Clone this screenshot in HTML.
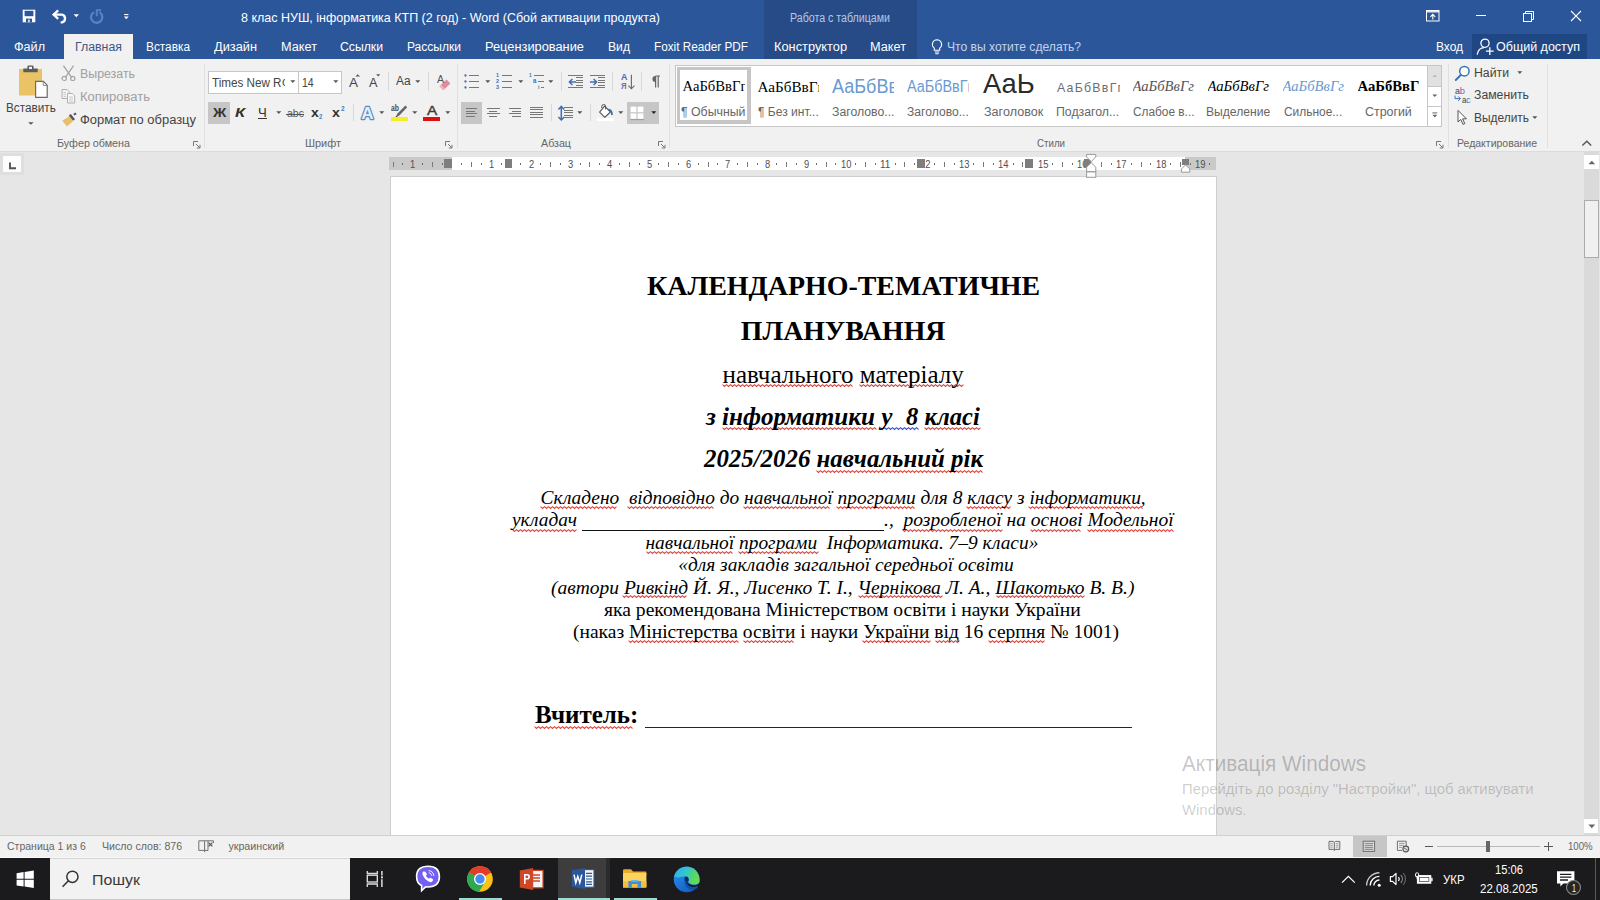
<!DOCTYPE html>
<html lang="ru"><head><meta charset="utf-8"><title>Word</title>
<style>
html,body{margin:0;padding:0;width:1600px;height:900px;overflow:hidden;background:#e6e6e6;font-family:"Liberation Sans",sans-serif;}
#r{position:relative;width:1600px;height:900px;overflow:hidden;}
#r>div,#r>svg,#r>span{position:absolute;display:block;}
.t{white-space:pre;transform-origin:0 50%;}
.bl{display:inline-block;width:0;height:0;}
</style></head><body><div id="r">
<div style="left:0px;top:0px;width:1600px;height:59px;background:#2b579a;"></div>
<div style="left:764px;top:0px;width:153px;height:59px;background:#264b87;"></div>
<div style="left:1472px;top:34px;width:115px;height:25px;background:#1f4784;"></div>
<div style="left:64px;top:34px;width:69px;height:26px;background:#f1f1f1;"></div>
<div style="left:0px;top:59px;width:1600px;height:93px;background:#f1f1f1;"></div>
<div style="left:0px;top:151px;width:1600px;height:1px;background:#dcdcdc;"></div>
<div style="left:0px;top:152px;width:1600px;height:684px;background:#e6e6e6;"></div>
<div style="left:389px;top:157px;width:827px;height:13px;background:#ffffff;"></div>
<div style="left:389px;top:157px;width:63px;height:13px;background:#c9c9c9;"></div>
<div style="left:1185px;top:157px;width:31px;height:13px;background:#c9c9c9;"></div>
<div style="left:390px;top:176px;width:827px;height:660px;background:#cecece;"></div>
<div style="left:391px;top:177px;width:825px;height:659px;background:#ffffff;"></div>
<div style="left:1583.5px;top:152px;width:15.2px;height:684px;background:#dadada;"></div>
<div style="left:0px;top:835px;width:1600px;height:1px;background:#d0d0d0;"></div>
<div style="left:0px;top:836px;width:1600px;height:22px;background:#f1f1f1;"></div>
<div style="left:0px;top:858px;width:1600px;height:42px;background:#1b1b1d;"></div>
<div style="left:50px;top:858px;width:300px;height:42px;background:#f2f2f2;"></div>
<div style="left:50px;top:858px;width:300px;height:1px;background:#d4d4d4;"></div>
<div style="left:50px;top:899px;width:300px;height:1px;background:#cacaca;"></div>
<div style="left:208px;top:71px;width:134px;height:23px;background:#c6c6c6;"></div>
<div style="left:209px;top:72px;width:89px;height:21px;background:#fff;"></div>
<div style="left:299px;top:72px;width:42px;height:21px;background:#fff;"></div>
<div style="left:282px;top:74px;width:3.4px;height:16px;overflow:hidden;font:12px/1 'Liberation Sans',sans-serif;color:#444"><span style="position:absolute;left:0;top:2.34px">o</span></div>
<div style="left:208px;top:102px;width:22px;height:22px;background:#c6c6c6;"></div>
<div style="left:461px;top:102px;width:21px;height:22px;background:#c6c6c6;"></div>
<div style="left:627px;top:102px;width:32px;height:22px;background:#c6c6c6;"></div>
<div style="left:675px;top:65px;width:767px;height:62px;background:#c6c6c6;"></div>
<div style="left:676px;top:66px;width:765px;height:60px;background:#ffffff;"></div>
<div style="left:1427px;top:66px;width:1px;height:60px;background:#c6c6c6;"></div>
<div style="left:1428px;top:66px;width:13px;height:20px;background:#e1e1e1;"></div>
<div style="left:1428px;top:86px;width:13px;height:1px;background:#c6c6c6;"></div>
<div style="left:1428px;top:105.5px;width:13px;height:1px;background:#c6c6c6;"></div>
<div style="left:676.5px;top:66.5px;width:74px;height:57px;background:#c6c6c6;"></div>
<div style="left:680px;top:70px;width:67px;height:50px;background:#fff;"></div>
<div style="left:682.5px;top:75.46px;width:62.10px;height:22.7px;overflow:hidden"><span style="position:absolute;left:0;top:4px;white-space:pre;font:14.67px/1 'Liberation Serif',serif;color:#000;transform-origin:0 50%;transform:scaleX(1.0);letter-spacing:0px">АаБбВвГг</span></div>
<div style="left:757.5px;top:75.02px;width:61.40px;height:23.2px;overflow:hidden"><span style="position:absolute;left:0;top:4px;white-space:pre;font:15.2px/1 'Liberation Serif',serif;color:#000;transform-origin:0 50%;transform:scaleX(1.0);letter-spacing:0px">АаБбВвГг</span></div>
<div style="left:832px;top:71.90px;width:62.00px;height:28.5px;overflow:hidden"><span style="position:absolute;left:0;top:4px;white-space:pre;font:20.5px/1 'Liberation Sans',sans-serif;color:#6a9ad0;transform-origin:0 50%;transform:scaleX(0.88);letter-spacing:0px">АаБбВвГг</span></div>
<div style="left:907px;top:74.96px;width:61.90px;height:24.0px;overflow:hidden"><span style="position:absolute;left:0;top:4px;white-space:pre;font:16px/1 'Liberation Sans',sans-serif;color:#6a9ad0;transform-origin:0 50%;transform:scaleX(0.9);letter-spacing:0px">АаБбВвГг</span></div>
<div style="left:983px;top:66.06px;width:59.00px;height:35.4px;overflow:hidden"><span style="position:absolute;left:0;top:4px;white-space:pre;font:27.4px/1 'Liberation Sans',sans-serif;color:#2a2a2a;transform-origin:0 50%;transform:scaleX(1.0);letter-spacing:0px">АаЬ</span></div>
<div style="left:1057px;top:77.00px;width:62.60px;height:21.0px;overflow:hidden"><span style="position:absolute;left:0;top:4px;white-space:pre;font:13px/1 'Liberation Sans',sans-serif;color:#6e6e6e;transform-origin:0 50%;transform:scaleX(0.95);letter-spacing:1.3px">АаБбВвГг</span></div>
<div style="left:1132.5px;top:75.46px;width:62.10px;height:22.7px;overflow:hidden"><span style="position:absolute;left:0;top:4px;white-space:pre;font:italic 14.67px/1 'Liberation Serif',serif;color:#555;transform-origin:0 50%;transform:scaleX(1.0);letter-spacing:0px">АаБбВвГг</span></div>
<div style="left:1207.5px;top:75.46px;width:62.10px;height:22.7px;overflow:hidden"><span style="position:absolute;left:0;top:4px;white-space:pre;font:italic 14.67px/1 'Liberation Serif',serif;color:#000;transform-origin:0 50%;transform:scaleX(1.0);letter-spacing:0px">АаБбВвГг</span></div>
<div style="left:1282.5px;top:75.46px;width:61.50px;height:22.7px;overflow:hidden"><span style="position:absolute;left:0;top:4px;white-space:pre;font:italic 14.67px/1 'Liberation Serif',serif;color:#6a9ad0;transform-origin:0 50%;transform:scaleX(1.0);letter-spacing:0px">АаБбВвГг</span></div>
<div style="left:1357.5px;top:75.46px;width:61.40px;height:22.7px;overflow:hidden"><span style="position:absolute;left:0;top:4px;white-space:pre;font:bold 14.67px/1 'Liberation Serif',serif;color:#000;transform-origin:0 50%;transform:scaleX(1.0);letter-spacing:0px">АаБбВвГг</span></div>
<svg style="left:1431.5px;top:74px;" width="6" height="4" viewBox="0 0 6 4"><path d="M0.6 3L2.8 0.8L5 3Z" fill="#b5b5b5"/></svg>
<svg style="left:1431.5px;top:94px;" width="6" height="4" viewBox="0 0 6 4"><path d="M0.4 0.4H5.2L2.8 3Z" fill="#666"/></svg>
<svg style="left:1431.5px;top:112px;" width="6" height="7" viewBox="0 0 6 7"><rect x="0.4" y="0.4" width="4.8" height="1" fill="#666"/><path d="M0.4 2.8H5.2L2.8 5.4Z" fill="#666"/></svg>
<div style="left:582px;top:529.5px;width:302px;height:1.1px;background:#111;"></div>
<div style="left:644.7px;top:726.7px;width:487.7px;height:1.5px;background:#262626;"></div>
<svg style="left:22px;top:9px;" width="14" height="14" viewBox="0 0 14 14"><path d="M0.7 0.7H13.3V13.3H0.7Z" fill="#fff"/><rect x="2.6" y="1.8" width="8.8" height="5.4" fill="#2b579a"/><rect x="4" y="9.6" width="6" height="3.7" fill="#2b579a"/><rect x="6.2" y="10.6" width="1.4" height="2.7" fill="#fff"/></svg>
<svg style="left:52px;top:9px;" width="17" height="15" viewBox="0 0 17 15"><path d="M6.2 1.4L1.6 5.6L6.2 9.8" fill="none" stroke="#fff" stroke-width="2.3"/><path d="M2 5.6H10.2A4.1 4.1 0 0 1 10.2 13.4H8.6" fill="none" stroke="#fff" stroke-width="2.3"/></svg>
<svg style="left:73px;top:14px;" width="7" height="4" viewBox="0 0 7 4"><path d="M0.6 0.2H6L3.3 3.2Z" fill="#fff"/></svg>
<svg style="left:89px;top:9px;" width="15" height="15" viewBox="0 0 15 15"><path d="M5 3.2A5.6 5.6 0 1 0 10.6 3.4" fill="none" stroke="#5b80bf" stroke-width="2.3"/><path d="M7.8 7.2V1.2H12.2" fill="none" stroke="#5b80bf" stroke-width="2"/></svg>
<svg style="left:123px;top:13px;" width="7" height="8" viewBox="0 0 7 8"><rect x="1.2" y="1" width="4.2" height="1.1" fill="#fff"/><path d="M0.9 3.6H5.7L3.3 6.2Z" fill="#fff"/></svg>
<svg style="left:1425px;top:9px;" width="16" height="14" viewBox="0 0 16 14"><rect x="1.5" y="1.5" width="12.5" height="10.5" fill="none" stroke="#fff" stroke-width="1"/><rect x="1.5" y="1.5" width="12.5" height="2" fill="#fff" opacity=".85"/><path d="M7.8 10.5V5.6M5.4 7.8L7.8 5.4L10.2 7.8" fill="none" stroke="#fff" stroke-width="1.1"/></svg>
<div style="left:1476px;top:15px;width:10px;height:1px;background:#fff;"></div>
<svg style="left:1521px;top:9px;" width="14" height="14" viewBox="0 0 14 14"><rect x="2.5" y="4.5" width="8" height="8" fill="none" stroke="#fff" stroke-width="1"/><path d="M4.5 4.5V2.5H12.5V10.5H10.5" fill="none" stroke="#fff" stroke-width="1"/></svg>
<svg style="left:1570px;top:10px;" width="12" height="12" viewBox="0 0 12 12"><path d="M1 1L11 11M11 1L1 11" stroke="#fff" stroke-width="1.1" fill="none"/></svg>
<svg style="left:929px;top:38px;" width="16" height="18" viewBox="0 0 16 18"><path d="M8 1.8A4.6 4.6 0 0 0 5.3 10.1V12.2H10.7V10.1A4.6 4.6 0 0 0 8 1.8Z" fill="none" stroke="#fff" stroke-width="1.1"/><path d="M5.8 14H10.2M6.3 15.8H9.7" stroke="#fff" stroke-width="1.1"/></svg>
<svg style="left:1476px;top:37px;" width="20" height="20" viewBox="0 0 20 20"><circle cx="9" cy="6.2" r="4.1" fill="none" stroke="#fff" stroke-width="1.3"/><path d="M1.2 17.6C2 13 5 10.6 8.2 10.6" fill="none" stroke="#fff" stroke-width="1.3"/><path d="M13.8 10.2V18M9.9 14.1H17.7" stroke="#fff" stroke-width="1.3"/></svg>
<svg style="left:17px;top:64px;" width="34" height="36" viewBox="0 0 34 36"><rect x="2" y="5" width="23" height="26.5" fill="#eac367"/>
<path d="M6.3 4.6H10.4V2.6Q10.4 1.4 11.6 1.4H15.4Q16.6 1.4 16.6 2.6V4.6H20.7V8.2H6.3Z" fill="#5c5c5c"/><rect x="12" y="2.8" width="3" height="2.2" fill="#f3f3f3"/>
<path d="M18.6 17.4H26.4L30.2 21.2V33.4H18.6Z" fill="#fff" stroke="#6b6b6b" stroke-width="1.2"/><path d="M26.2 17.6V21.4H30" fill="none" stroke="#8a8a8a" stroke-width="1"/></svg>
<svg style="left:28px;top:122px;" width="6" height="3" viewBox="0 0 6 3"><path d="M0.2 0.2H5.6L2.9 2.8Z" fill="#555"/></svg>
<svg style="left:60px;top:64px;" width="17" height="18" viewBox="0 0 17 18"><path d="M3.4 1.6L11.6 13.4M13.6 1.6L5.4 13.4" stroke="#a6a6a6" stroke-width="1.3" fill="none"/><circle cx="4.2" cy="14.4" r="2.1" fill="none" stroke="#a6a6a6" stroke-width="1.2"/><circle cx="12.8" cy="14.4" r="2.1" fill="none" stroke="#a6a6a6" stroke-width="1.2"/></svg>
<svg style="left:60px;top:88px;" width="17" height="17" viewBox="0 0 17 17"><path d="M2 1.5H7L9.2 3.7V10.5H2Z" fill="#f3f3f3" stroke="#b0b0b0" stroke-width="1"/><path d="M7.5 5.5H12.5L14.7 7.7V15H7.5Z" fill="#f7f7f7" stroke="#b0b0b0" stroke-width="1"/><path d="M3.5 4.5H6M3.5 6.5H6M3.5 8.5H6M9 9H13M9 11H13M9 13H13" stroke="#c4c4c4" stroke-width="0.9"/></svg>
<svg style="left:61px;top:112px;" width="17" height="16" viewBox="0 0 17 16"><path d="M1.2 8.8L8.4 4.2L12 9.2L6 14.6Z" fill="#e9c06a"/><path d="M7.8 3.4L9.8 1.9L14 7.3L12 8.8Z" fill="#555"/><path d="M12.2 2L14.4 0.6L15.6 2.2L13.4 3.6Z" fill="#555"/></svg>
<svg style="left:193px;top:141px;" width="8" height="8" viewBox="0 0 8 8"><path d="M0.5 5V0.5H5" fill="none" stroke="#777" stroke-width="1"/><path d="M3 3L6.8 6.8M7 3.8V7H3.8" fill="none" stroke="#777" stroke-width="1"/></svg>
<svg style="left:445px;top:141px;" width="8" height="8" viewBox="0 0 8 8"><path d="M0.5 5V0.5H5" fill="none" stroke="#777" stroke-width="1"/><path d="M3 3L6.8 6.8M7 3.8V7H3.8" fill="none" stroke="#777" stroke-width="1"/></svg>
<svg style="left:658px;top:141px;" width="8" height="8" viewBox="0 0 8 8"><path d="M0.5 5V0.5H5" fill="none" stroke="#777" stroke-width="1"/><path d="M3 3L6.8 6.8M7 3.8V7H3.8" fill="none" stroke="#777" stroke-width="1"/></svg>
<svg style="left:1436px;top:141px;" width="8" height="8" viewBox="0 0 8 8"><path d="M0.5 5V0.5H5" fill="none" stroke="#777" stroke-width="1"/><path d="M3 3L6.8 6.8M7 3.8V7H3.8" fill="none" stroke="#777" stroke-width="1"/></svg>
<div style="left:204px;top:64px;width:1px;height:84px;background:#e0e0e0;"></div>
<div style="left:457px;top:64px;width:1px;height:84px;background:#e0e0e0;"></div>
<div style="left:669px;top:64px;width:1px;height:84px;background:#e0e0e0;"></div>
<div style="left:1448px;top:64px;width:1px;height:84px;background:#e0e0e0;"></div>
<div style="left:1547px;top:64px;width:1px;height:84px;background:#e0e0e0;"></div>
<svg style="left:289.5px;top:80px;" width="6" height="4" viewBox="0 0 6 4"><path d="M0.3 0.3H5.3L2.8 3Z" fill="#555"/></svg>
<svg style="left:332.5px;top:80px;" width="6" height="4" viewBox="0 0 6 4"><path d="M0.3 0.3H5.3L2.8 3Z" fill="#555"/></svg>
<svg style="left:355px;top:74px;" width="6" height="3" viewBox="0 0 6 3"><path d="M0.4 2.6L2.7 0.3L5 2.6Z" fill="#555"/></svg>
<svg style="left:376px;top:74.4px;" width="5" height="3" viewBox="0 0 5 3"><path d="M0.2 0.3H4.2L2.2 2.4Z" fill="#555"/></svg>
<div style="left:388px;top:72px;width:1px;height:19px;background:#d8d8d8;"></div>
<svg style="left:415px;top:80px;" width="6" height="4" viewBox="0 0 6 4"><path d="M0.3 0.3H5.3L2.8 3Z" fill="#555"/></svg>
<div style="left:427.5px;top:72px;width:1px;height:19px;background:#d8d8d8;"></div>
<svg style="left:438px;top:78px;" width="14" height="13" viewBox="0 0 14 13"><path d="M1.4 8.2L8.6 1.6L12.4 5.6L5.4 12.2Z" fill="#e28b9c"/><path d="M1.4 8.2L3 6.8L6.8 10.8L5.4 12.2Z" fill="#f0b5c0"/></svg>
<div style="left:258px;top:118.3px;width:9.4px;height:1.1px;background:#333;"></div>
<svg style="left:275.6px;top:111px;" width="6" height="4" viewBox="0 0 6 4"><path d="M0.3 0.3H5.3L2.8 3Z" fill="#555"/></svg>
<div style="left:285.8px;top:113.6px;width:18.6px;height:1px;background:#555;"></div>
<div style="left:352.5px;top:104px;width:1px;height:17px;background:#d8d8d8;"></div>
<svg style="left:358px;top:102px;" width="19" height="20" viewBox="0 0 19 20"><text x="9.4" y="16.9" text-anchor="middle" font-family="Liberation Sans" font-size="17" font-weight="bold" fill="#e4eef9" stroke="#5a8cc4" stroke-width="2.4" paint-order="stroke" stroke-linejoin="round">A</text></svg>
<svg style="left:379.3px;top:111px;" width="6" height="4" viewBox="0 0 6 4"><path d="M0.3 0.3H5.3L2.8 3Z" fill="#555"/></svg>
<svg style="left:392px;top:104px;" width="17" height="14" viewBox="0 0 17 14"><path d="M13.4 1.6L15.2 3.2L7.4 11.6L4.4 12.6L5.2 9.8Z" fill="#666"/><path d="M3 13.4L4.6 11.4L6 12.6Z" fill="#444"/></svg>
<div style="left:390.8px;top:116.9px;width:17px;height:3.8px;background:#f5ee20;"></div>
<svg style="left:412.4px;top:111px;" width="6" height="4" viewBox="0 0 6 4"><path d="M0.3 0.3H5.3L2.8 3Z" fill="#555"/></svg>
<div style="left:423.4px;top:116.9px;width:16.4px;height:3.7px;background:#e01010;"></div>
<svg style="left:444.8px;top:111px;" width="6" height="4" viewBox="0 0 6 4"><path d="M0.3 0.3H5.3L2.8 3Z" fill="#555"/></svg>
<svg style="left:1453px;top:64px;" width="18" height="18" viewBox="0 0 18 18"><circle cx="11.4" cy="7.2" r="4.7" fill="#fdfdf3" stroke="#3b70b6" stroke-width="1.5"/><path d="M7.9 10.9L2.8 16" stroke="#3b70b6" stroke-width="2" stroke-linecap="round"/></svg>
<svg style="left:1517px;top:70.5px;" width="6" height="4" viewBox="0 0 6 4"><path d="M0.3 0.3H5.3L2.8 3Z" fill="#555"/></svg>
<svg style="left:1454px;top:95px;" width="8" height="7" viewBox="0 0 8 7"><path d="M1 0.6V3.6H6.2M4.2 1.4L6.4 3.6L4.2 5.8" fill="none" stroke="#3b70b6" stroke-width="1"/></svg>
<svg style="left:1456px;top:109px;" width="13" height="17" viewBox="0 0 13 17"><path d="M2 1.4V13L4.8 10.4L7 15.4L8.8 14.6L6.6 9.8H10.4Z" fill="#fff" stroke="#555" stroke-width="1" stroke-linejoin="round"/></svg>
<svg style="left:1532.3px;top:115.6px;" width="6" height="4" viewBox="0 0 6 4"><path d="M0.3 0.3H5.3L2.8 3Z" fill="#555"/></svg>
<svg style="left:1581px;top:139px;" width="12" height="8" viewBox="0 0 12 8"><path d="M1.4 6.6L5.8 2.2L10.2 6.6" fill="none" stroke="#555" stroke-width="1.4"/></svg>
<svg style="left:463.8px;top:73.8px;" width="3" height="3" viewBox="0 0 3 3"><circle cx="1.5" cy="1.5" r="1.15" fill="#3f6fb3"/></svg>
<div style="left:469px;top:74.8px;width:10px;height:1px;background:#777777;"></div>
<svg style="left:463.8px;top:79.7px;" width="3" height="3" viewBox="0 0 3 3"><circle cx="1.5" cy="1.5" r="1.15" fill="#3f6fb3"/></svg>
<div style="left:469px;top:80.7px;width:10px;height:1px;background:#777777;"></div>
<svg style="left:463.8px;top:85.5px;" width="3" height="3" viewBox="0 0 3 3"><circle cx="1.5" cy="1.5" r="1.15" fill="#3f6fb3"/></svg>
<div style="left:469px;top:86.5px;width:10px;height:1px;background:#777777;"></div>
<svg style="left:485px;top:80px;" width="6" height="4" viewBox="0 0 6 4"><path d="M0.3 0.3H5.3L2.8 3Z" fill="#555"/></svg>
<div style="left:501.7px;top:74.8px;width:10.0px;height:1px;background:#777777;"></div>
<div style="left:501.7px;top:80.7px;width:10.0px;height:1px;background:#777777;"></div>
<div style="left:501.7px;top:86.5px;width:10.0px;height:1px;background:#777777;"></div>
<svg style="left:517.6px;top:80px;" width="6" height="4" viewBox="0 0 6 4"><path d="M0.3 0.3H5.3L2.8 3Z" fill="#555"/></svg>
<div style="left:534.1px;top:74.8px;width:10.0px;height:1px;background:#777777;"></div>
<div style="left:538.2px;top:80.7px;width:5.9px;height:1px;background:#777777;"></div>
<div style="left:541px;top:86.5px;width:3.1px;height:1px;background:#777777;"></div>
<svg style="left:548.2px;top:80px;" width="6" height="4" viewBox="0 0 6 4"><path d="M0.3 0.3H5.3L2.8 3Z" fill="#555"/></svg>
<div style="left:561px;top:72px;width:1px;height:19px;background:#d8d8d8;"></div>
<div style="left:568.3px;top:74.8px;width:14.7px;height:1px;background:#777777;"></div>
<div style="left:568.3px;top:87.1px;width:14.7px;height:1px;background:#777777;"></div>
<div style="left:576.2px;top:77.4px;width:6.8px;height:1px;background:#777777;"></div>
<div style="left:576.2px;top:79.9px;width:6.8px;height:1px;background:#777777;"></div>
<div style="left:576.2px;top:82.4px;width:6.8px;height:1px;background:#777777;"></div>
<div style="left:576.2px;top:84.9px;width:6.8px;height:1px;background:#777777;"></div>
<svg style="left:567.6px;top:77.5px;" width="9" height="8" viewBox="0 0 9 8"><path d="M8 4H1.6M4.4 1L1.4 4L4.4 7" fill="none" stroke="#3f6fb3" stroke-width="1.5"/></svg>
<div style="left:590.2px;top:74.8px;width:14.8px;height:1px;background:#777777;"></div>
<div style="left:590.2px;top:87.1px;width:14.8px;height:1px;background:#777777;"></div>
<div style="left:598.1px;top:77.4px;width:6.9px;height:1px;background:#777777;"></div>
<div style="left:598.1px;top:79.9px;width:6.9px;height:1px;background:#777777;"></div>
<div style="left:598.1px;top:82.4px;width:6.9px;height:1px;background:#777777;"></div>
<div style="left:598.1px;top:84.9px;width:6.9px;height:1px;background:#777777;"></div>
<svg style="left:589.4px;top:77.5px;" width="9" height="8" viewBox="0 0 9 8"><path d="M1 4H7.4M4.6 1L7.6 4L4.6 7" fill="none" stroke="#3f6fb3" stroke-width="1.5"/></svg>
<div style="left:611.6px;top:72px;width:1px;height:19px;background:#d8d8d8;"></div>
<svg style="left:627px;top:73.5px;" width="9" height="17" viewBox="0 0 9 17"><path d="M4.4 0.8V14.6M1.4 11.6L4.4 14.8L7.4 11.6" fill="none" stroke="#666" stroke-width="1.1"/></svg>
<div style="left:641.2px;top:72px;width:1px;height:19px;background:#d8d8d8;"></div>
<svg style="left:650px;top:75px;" width="11" height="14" viewBox="0 0 11 14"><path d="M5.4 1H10M5.6 1V12.6M8.2 1V12.6" fill="none" stroke="#666" stroke-width="1.2"/><path d="M5.4 1A3 3 0 0 0 5.4 7Z" fill="#666"/></svg>
<div style="left:465.9px;top:108.0px;width:11.4px;height:1px;background:#777777;"></div>
<div style="left:465.9px;top:110.5px;width:9.0px;height:1px;background:#777777;"></div>
<div style="left:465.9px;top:113.1px;width:11.4px;height:1px;background:#777777;"></div>
<div style="left:465.9px;top:115.7px;width:9.0px;height:1px;background:#777777;"></div>
<div style="left:486.6px;top:108.0px;width:13.2px;height:1px;background:#777777;"></div>
<div style="left:489.3px;top:110.5px;width:8.1px;height:1px;background:#777777;"></div>
<div style="left:486.6px;top:113.1px;width:13.2px;height:1px;background:#777777;"></div>
<div style="left:489.3px;top:115.7px;width:8.1px;height:1px;background:#777777;"></div>
<div style="left:509.1px;top:108.0px;width:11.9px;height:1px;background:#777777;"></div>
<div style="left:512px;top:110.5px;width:9px;height:1px;background:#777777;"></div>
<div style="left:509.1px;top:113.1px;width:11.9px;height:1px;background:#777777;"></div>
<div style="left:512px;top:115.7px;width:9px;height:1px;background:#777777;"></div>
<div style="left:530px;top:106.7px;width:13.2px;height:1px;background:#777777;"></div>
<div style="left:530px;top:109.1px;width:13.2px;height:1px;background:#777777;"></div>
<div style="left:530px;top:111.6px;width:13.2px;height:1px;background:#777777;"></div>
<div style="left:530px;top:114.1px;width:13.2px;height:1px;background:#777777;"></div>
<div style="left:530px;top:116.6px;width:13.2px;height:1px;background:#777777;"></div>
<div style="left:551px;top:104px;width:1px;height:17px;background:#d8d8d8;"></div>
<svg style="left:556.6px;top:104.5px;" width="9" height="16.5" viewBox="0 0 9 16.5"><path d="M4.3 1.4V15M1.4 4.4L4.3 1.4L7.2 4.4M1.4 12L4.3 15L7.2 12" fill="none" stroke="#3f6fb3" stroke-width="1.5"/></svg>
<div style="left:564.3px;top:107.2px;width:8.3px;height:1px;background:#777777;"></div>
<div style="left:564.3px;top:109.7px;width:8.3px;height:1px;background:#777777;"></div>
<div style="left:564.3px;top:112.2px;width:8.3px;height:1px;background:#777777;"></div>
<div style="left:564.3px;top:114.8px;width:8.3px;height:1px;background:#777777;"></div>
<div style="left:564.3px;top:117.3px;width:8.3px;height:1px;background:#777777;"></div>
<svg style="left:577.4px;top:110.8px;" width="6" height="4" viewBox="0 0 6 4"><path d="M0.3 0.3H5.3L2.8 3Z" fill="#555"/></svg>
<div style="left:590px;top:104px;width:1px;height:17px;background:#d8d8d8;"></div>
<svg style="left:597px;top:102.5px;" width="18" height="19" viewBox="0 0 18 19"><path d="M7.6 3.2L13.4 9L7.8 14.4L2.6 9.2Z" fill="#fff" stroke="#555" stroke-width="1.1" stroke-linejoin="round"/><path d="M8.6 6.4V3.4A1.9 1.9 0 0 0 4.8 3.4V5" fill="none" stroke="#555" stroke-width="1"/><path d="M11.4 6.4Q15 7 15 12" fill="none" stroke="#3f6fb3" stroke-width="1.8"/><rect x="0" y="15" width="17" height="3.2" fill="#ffffff"/></svg>
<svg style="left:618.1px;top:110.8px;" width="6" height="4" viewBox="0 0 6 4"><path d="M0.3 0.3H5.3L2.8 3Z" fill="#555"/></svg>
<svg style="left:630px;top:105.5px;" width="15" height="15" viewBox="0 0 15 15"><rect x="0.6" y="0.6" width="5.8" height="5.6" fill="#fff"/><rect x="7.6" y="0.6" width="5.8" height="5.6" fill="#fff"/><rect x="0.6" y="7.4" width="5.8" height="5.4" fill="#fff"/><rect x="7.6" y="7.4" width="5.8" height="5.4" fill="#fff"/><rect x="0.2" y="13.1" width="13.6" height="1" fill="#9a9a9a"/></svg>
<svg style="left:650.8px;top:110.8px;" width="6" height="4" viewBox="0 0 6 4"><path d="M0.3 0.3H5.3L2.8 3Z" fill="#222"/></svg>
<div style="left:393px;top:161.5px;width:1px;height:5px;background:#7a7a7a;"></div>
<div style="left:402px;top:163px;width:1px;height:2px;background:#6a6a6a;"></div>
<div style="left:422px;top:163px;width:1px;height:2px;background:#6a6a6a;"></div>
<div style="left:432px;top:161.5px;width:1px;height:5px;background:#7a7a7a;"></div>
<div style="left:442px;top:163px;width:1px;height:2px;background:#6a6a6a;"></div>
<div style="left:461px;top:163px;width:1px;height:2px;background:#6a6a6a;"></div>
<div style="left:471px;top:161.5px;width:1px;height:5px;background:#7a7a7a;"></div>
<div style="left:481px;top:163px;width:1px;height:2px;background:#6a6a6a;"></div>
<div style="left:501px;top:163px;width:1px;height:2px;background:#6a6a6a;"></div>
<div style="left:511px;top:161.5px;width:1px;height:5px;background:#7a7a7a;"></div>
<div style="left:520px;top:163px;width:1px;height:2px;background:#6a6a6a;"></div>
<div style="left:540px;top:163px;width:1px;height:2px;background:#6a6a6a;"></div>
<div style="left:550px;top:161.5px;width:1px;height:5px;background:#7a7a7a;"></div>
<div style="left:560px;top:163px;width:1px;height:2px;background:#6a6a6a;"></div>
<div style="left:580px;top:163px;width:1px;height:2px;background:#6a6a6a;"></div>
<div style="left:589px;top:161.5px;width:1px;height:5px;background:#7a7a7a;"></div>
<div style="left:599px;top:163px;width:1px;height:2px;background:#6a6a6a;"></div>
<div style="left:619px;top:163px;width:1px;height:2px;background:#6a6a6a;"></div>
<div style="left:629px;top:161.5px;width:1px;height:5px;background:#7a7a7a;"></div>
<div style="left:639px;top:163px;width:1px;height:2px;background:#6a6a6a;"></div>
<div style="left:658px;top:163px;width:1px;height:2px;background:#6a6a6a;"></div>
<div style="left:668px;top:161.5px;width:1px;height:5px;background:#7a7a7a;"></div>
<div style="left:678px;top:163px;width:1px;height:2px;background:#6a6a6a;"></div>
<div style="left:698px;top:163px;width:1px;height:2px;background:#6a6a6a;"></div>
<div style="left:708px;top:161.5px;width:1px;height:5px;background:#7a7a7a;"></div>
<div style="left:717px;top:163px;width:1px;height:2px;background:#6a6a6a;"></div>
<div style="left:737px;top:163px;width:1px;height:2px;background:#6a6a6a;"></div>
<div style="left:747px;top:161.5px;width:1px;height:5px;background:#7a7a7a;"></div>
<div style="left:757px;top:163px;width:1px;height:2px;background:#6a6a6a;"></div>
<div style="left:776px;top:163px;width:1px;height:2px;background:#6a6a6a;"></div>
<div style="left:786px;top:161.5px;width:1px;height:5px;background:#7a7a7a;"></div>
<div style="left:796px;top:163px;width:1px;height:2px;background:#6a6a6a;"></div>
<div style="left:816px;top:163px;width:1px;height:2px;background:#6a6a6a;"></div>
<div style="left:826px;top:161.5px;width:1px;height:5px;background:#7a7a7a;"></div>
<div style="left:835px;top:163px;width:1px;height:2px;background:#6a6a6a;"></div>
<div style="left:855px;top:163px;width:1px;height:2px;background:#6a6a6a;"></div>
<div style="left:865px;top:161.5px;width:1px;height:5px;background:#7a7a7a;"></div>
<div style="left:875px;top:163px;width:1px;height:2px;background:#6a6a6a;"></div>
<div style="left:895px;top:163px;width:1px;height:2px;background:#6a6a6a;"></div>
<div style="left:904px;top:161.5px;width:1px;height:5px;background:#7a7a7a;"></div>
<div style="left:914px;top:163px;width:1px;height:2px;background:#6a6a6a;"></div>
<div style="left:934px;top:163px;width:1px;height:2px;background:#6a6a6a;"></div>
<div style="left:944px;top:161.5px;width:1px;height:5px;background:#7a7a7a;"></div>
<div style="left:954px;top:163px;width:1px;height:2px;background:#6a6a6a;"></div>
<div style="left:973px;top:163px;width:1px;height:2px;background:#6a6a6a;"></div>
<div style="left:983px;top:161.5px;width:1px;height:5px;background:#7a7a7a;"></div>
<div style="left:993px;top:163px;width:1px;height:2px;background:#6a6a6a;"></div>
<div style="left:1013px;top:163px;width:1px;height:2px;background:#6a6a6a;"></div>
<div style="left:1022px;top:161.5px;width:1px;height:5px;background:#7a7a7a;"></div>
<div style="left:1032px;top:163px;width:1px;height:2px;background:#6a6a6a;"></div>
<div style="left:1052px;top:163px;width:1px;height:2px;background:#6a6a6a;"></div>
<div style="left:1062px;top:161.5px;width:1px;height:5px;background:#7a7a7a;"></div>
<div style="left:1072px;top:163px;width:1px;height:2px;background:#6a6a6a;"></div>
<div style="left:1091px;top:163px;width:1px;height:2px;background:#6a6a6a;"></div>
<div style="left:1101px;top:161.5px;width:1px;height:5px;background:#7a7a7a;"></div>
<div style="left:1111px;top:163px;width:1px;height:2px;background:#6a6a6a;"></div>
<div style="left:1131px;top:163px;width:1px;height:2px;background:#6a6a6a;"></div>
<div style="left:1141px;top:161.5px;width:1px;height:5px;background:#7a7a7a;"></div>
<div style="left:1150px;top:163px;width:1px;height:2px;background:#6a6a6a;"></div>
<div style="left:1170px;top:163px;width:1px;height:2px;background:#6a6a6a;"></div>
<div style="left:1180px;top:161.5px;width:1px;height:5px;background:#7a7a7a;"></div>
<div style="left:1190px;top:163px;width:1px;height:2px;background:#6a6a6a;"></div>
<div style="left:1209px;top:163px;width:1px;height:2px;background:#6a6a6a;"></div>
<div style="left:0px;top:153px;width:24px;height:22px;background:#dfdfdf;"></div>
<div style="left:3px;top:156px;width:17.6px;height:16px;background:#fdfdfd;"></div>
<svg style="left:3px;top:156px;" width="18" height="16" viewBox="0 0 18 16"><path d="M7 6.4V12.3H13" fill="none" stroke="#555" stroke-width="1.9"/></svg>
<div style="left:1583.5px;top:155px;width:15px;height:14px;background:#ffffff;"></div>
<svg style="left:1587.5px;top:160px;" width="8" height="5" viewBox="0 0 8 5"><path d="M0.4 4.2L3.8 0.8L7.2 4.2Z" fill="#666"/></svg>
<div style="left:1583.5px;top:200px;width:15px;height:58.4px;background:#ababab;"></div>
<div style="left:1584.5px;top:201px;width:13px;height:56.4px;background:#f0f0f0;"></div>
<div style="left:1584px;top:819px;width:14px;height:14px;background:#ffffff;"></div>
<svg style="left:1587.5px;top:823.5px;" width="8" height="5" viewBox="0 0 8 5"><path d="M0.4 0.6H7.2L3.8 4.2Z" fill="#666"/></svg>
<svg style="left:197px;top:839px;" width="18" height="14" viewBox="0 0 18 14"><path d="M1.8 1.8H7.6V11.4H1.8Z M7.6 1.8H11V11.4H7.6" fill="none" stroke="#707070" stroke-width="1"/><path d="M7.6 11.4V13.2" stroke="#707070" stroke-width="1"/><path d="M11.6 3.6L15.4 7.4M15.4 3.6L11.6 7.4" stroke="#555" stroke-width="1.2"/><path d="M11 1.8H16.4V4" fill="none" stroke="#707070" stroke-width="1"/></svg>
<svg style="left:1328px;top:840px;" width="13" height="12" viewBox="0 0 13 12"><path d="M1 1.4H5.4L6.4 2.4L7.4 1.4H11.8V9.4H7.4L6.4 10.6L5.4 9.4H1Z" fill="#e8e8e8" stroke="#707070" stroke-width="1"/><path d="M6.4 2.4V10.4" stroke="#707070" stroke-width="1"/><path d="M2.4 3.6H4.8M2.4 5.4H4.8M2.4 7.2H4.8M8 3.6H10.4M8 5.4H10.4M8 7.2H10.4" stroke="#9a9a9a" stroke-width="0.8"/></svg>
<div style="left:1353px;top:836px;width:33.6px;height:22px;background:#c6c6c6;"></div>
<svg style="left:1362px;top:840px;" width="14" height="13" viewBox="0 0 14 13"><rect x="1.2" y="1.2" width="11.4" height="10.2" fill="#d6d6d6" stroke="#707070" stroke-width="1"/><path d="M2.8 3.6H11M2.8 5.6H11M2.8 7.6H11M2.8 9.4H11" stroke="#808080" stroke-width="0.9"/></svg>
<svg style="left:1396px;top:840px;" width="14" height="13" viewBox="0 0 14 13"><path d="M1.4 1.2H10.2V6M1.4 1.2V10.4H6" fill="none" stroke="#707070" stroke-width="1"/><path d="M3 3.4H8.6M3 5.4H8M3 7.4H6" stroke="#909090" stroke-width="0.9"/><circle cx="9.8" cy="9" r="2.9" fill="#e0e0e0" stroke="#555" stroke-width="1.1"/><path d="M8 8L11.6 10" stroke="#555" stroke-width="0.8"/></svg>
<div style="left:1425.3px;top:846px;width:7.4px;height:1.3px;background:#555;"></div>
<div style="left:1436.5px;top:846px;width:103.5px;height:1.3px;background:#b8b8b8;"></div>
<div style="left:1486px;top:841px;width:4px;height:11.4px;background:#666;"></div>
<div style="left:1543.8px;top:846px;width:9.2px;height:1.3px;background:#555;"></div>
<div style="left:1547.8px;top:842px;width:1.3px;height:9.2px;background:#555;"></div>
<div style="left:0px;top:857px;width:1600px;height:1px;background:#f8f8f8;"></div>
<svg style="left:16px;top:870px;" width="19" height="19" viewBox="0 0 19 19"><path d="M0.6 3.2L7.6 2.1V8.8H0.6Z M8.6 2L17.8 0.6V8.8H8.6Z M0.6 9.8H7.6V16.5L0.6 15.4Z M8.6 9.8H17.8V18L8.6 16.6Z" fill="#fff"/></svg>
<svg style="left:60px;top:868px;" width="26" height="22" viewBox="0 0 26 22"><circle cx="12.4" cy="8.8" r="5.6" fill="none" stroke="#333" stroke-width="1.5"/><path d="M8.4 12.8L2.6 18.8" stroke="#333" stroke-width="1.6"/></svg>
<svg style="left:364px;top:869px;" width="22" height="20" viewBox="0 0 22 20"><rect x="3.3" y="6.2" width="10" height="6.8" fill="none" stroke="#e4e4e4" stroke-width="1.3"/><path d="M3.3 2V4.5H13.3V2M3.3 18V15H13.3V18" fill="none" stroke="#dcdcdc" stroke-width="1.3"/><path d="M17.9 2V6.6M17.9 10.2V18" stroke="#dcdcdc" stroke-width="1.5"/><rect x="17.1" y="7.4" width="1.7" height="1.9" fill="#fff"/></svg>
<svg style="left:414px;top:864px;" width="28" height="30" viewBox="0 0 28 30"><path d="M14 2.2C7 2.2 2.6 5.4 2.6 12.6C2.6 17.4 4.4 20.2 7.6 21.6V26.6L11.6 22.8C12.4 22.9 13.2 23 14 23C21 23 25.4 19.8 25.4 12.6C25.4 5.4 21 2.2 14 2.2Z" fill="#7360f2" stroke="#fff" stroke-width="1.6"/><path d="M9.4 7.6C8.6 8.2 8.2 9.2 8.6 10.4C9.6 13.6 12.4 16.6 15.8 18C16.8 18.4 17.8 18 18.4 17.2L18.9 16.4C19.2 15.9 19 15.4 18.6 15.1L16.8 13.9C16.4 13.6 15.9 13.7 15.6 14.1L15.1 14.7C13.7 14.1 12.5 12.9 11.9 11.5L12.5 11C12.9 10.7 13 10.2 12.7 9.8L11.5 8C11.2 7.5 10.6 7.3 10.1 7.5Z" fill="#fff"/><path d="M14.6 6.6C17.6 6.8 19.8 9 19.9 12M14.8 8.8C16.4 9 17.6 10.2 17.7 11.8" fill="none" stroke="#fff" stroke-width="0.9"/></svg>
<svg style="left:466px;top:865px;" width="28" height="28" viewBox="0 0 28 28"><circle cx="14" cy="14" r="12.8" fill="#fbc116"/><path d="M14 14L2.9 7.6A12.8 12.8 0 0 1 25.1 7.6Z" fill="#e33b2e"/><path d="M14 1.2A12.8 12.8 0 0 1 25.1 7.6H14Z" fill="#e33b2e"/><path d="M14 14L2.9 7.6A12.8 12.8 0 0 0 13 26.8L19 17Z" fill="#2da94f"/><path d="M14 14L8.4 17.4L2.9 7.6Z" fill="#2da94f"/><circle cx="14" cy="14" r="6" fill="#fff"/><circle cx="14" cy="14" r="4.7" fill="#4a8af4"/></svg>
<div style="left:459.2px;top:897.6px;width:42.8px;height:2.4px;background:#9cdcd3;"></div>
<svg style="left:519px;top:867px;" width="26" height="24" viewBox="0 0 26 24"><rect x="11" y="3.4" width="13" height="17.4" fill="#f4f4f4" stroke="#d04727" stroke-width="1.2"/><path d="M14 8H21M14 11H21M14 14H21" stroke="#d04727" stroke-width="1.4"/><path d="M0.8 3.4L14.2 1V23L0.8 20.6Z" fill="#d04727"/><path d="M5 17V7H8.2Q11 7 11 9.8Q11 12.6 8.2 12.6H6.6V17Z M6.6 8.6V11H8Q9.3 11 9.3 9.8Q9.3 8.6 8 8.6Z" fill="#fff" fill-rule="evenodd"/></svg>
<div style="left:558px;top:858px;width:47.5px;height:42px;background:#3d3d3d;"></div>
<div style="left:605.5px;top:858px;width:4px;height:42px;background:#2b2b2b;"></div>
<div style="left:558px;top:897.6px;width:51.5px;height:2.4px;background:#9cdcd3;"></div>
<svg style="left:571px;top:867px;" width="25" height="23" viewBox="0 0 25 23"><rect x="11" y="2.6" width="12" height="17.6" fill="#f4f4f4" stroke="#2b579a" stroke-width="1.1"/><path d="M15 6.4H21M15 9.2H21M15 12H21M15 14.8H21M15 17.4H21" stroke="#2b579a" stroke-width="1.2"/><path d="M0.8 3.2L14 1V22L0.8 19.8Z" fill="#2b579a"/><path d="M3 7.6L4.8 15.8L6.8 9.4L8.8 15.8L10.8 7.6" fill="none" stroke="#fff" stroke-width="1.5" stroke-linejoin="miter"/></svg>
<svg style="left:622px;top:867px;" width="26" height="23" viewBox="0 0 26 23"><path d="M1 3.4Q1 2.2 2.2 2.2H9L11 4.4H23.4Q24.4 4.4 24.4 5.4V8H1Z" fill="#e8a92d"/><rect x="1" y="6" width="23.4" height="14.6" rx="0.8" fill="#fbd35e"/><rect x="1" y="14.4" width="23.4" height="6.2" fill="#f3bf3f"/><path d="M6.4 20.8V14H19V20.8H15.6V17H9.8V20.8Z" fill="#3f8fd6"/><rect x="9" y="13" width="7.4" height="1.8" fill="#6db3ea"/></svg>
<div style="left:614.3px;top:897.6px;width:42.7px;height:2.4px;background:#9cdcd3;"></div>
<svg style="left:673px;top:865px;" width="27" height="28" viewBox="0 0 27 28"><defs><linearGradient id="eg1" x1="0" y1="0" x2="1" y2="0.35"><stop offset="0" stop-color="#3aa6f0"/><stop offset="0.45" stop-color="#2fc3d6"/><stop offset="0.8" stop-color="#4fd67a"/><stop offset="1" stop-color="#62dc55"/></linearGradient><linearGradient id="eg2" x1="0" y1="0" x2="0.6" y2="1"><stop offset="0" stop-color="#2b94ee"/><stop offset="1" stop-color="#1560c4"/></linearGradient></defs><circle cx="13.7" cy="14.4" r="12.9" fill="url(#eg2)"/><path d="M12 14.6C10.4 17.6 12.4 22.6 17 24.4C20.4 25.6 23.6 24.2 25.2 21.4C22 23 17.6 22 15.6 19C14.4 17.2 14.2 15.6 15 14.4Z" fill="#124fae"/><path d="M13 15C14 18 16 19.6 20 20.2C23 20.4 25 19.6 26.4 18.2L25.9 20.6C24 21.8 21 22.3 18.6 21.8C15.6 21 13.4 18.6 13 15Z" fill="#0d1826"/><path d="M0.9 12.4A12.9 12.9 0 0 1 26.4 17.2C25.6 19.4 22 19.8 19.4 19.4C16.6 19 15 17.4 15.6 16C16.6 14 15.4 11.6 13.2 11.4C9.6 11 7 13 3.6 12.2C2.4 11.9 1.4 12 0.9 12.4Z" fill="url(#eg1)"/><ellipse cx="13.6" cy="14.2" rx="2" ry="2.6" fill="#0c2b5e" transform="rotate(-25 13.6 14.2)"/></svg>
<svg style="left:1340px;top:874px;" width="17" height="11" viewBox="0 0 17 11"><path d="M2 8.6L8.4 2.4L14.8 8.6" fill="none" stroke="#fff" stroke-width="1.3"/></svg>
<svg style="left:1365px;top:871px;" width="17" height="17" viewBox="0 0 17 17"><circle cx="14.2" cy="14.2" r="1.5" fill="#fff"/><path d="M8.8 14.6A5.6 5.6 0 0 1 14.4 9" fill="none" stroke="#fff" stroke-width="1.4"/><path d="M5.2 14.6A9.2 9.2 0 0 1 14.4 5.4" fill="none" stroke="#fff" stroke-width="1.4"/><path d="M1.6 14.6A12.8 12.8 0 0 1 14.4 1.8" fill="none" stroke="#fff" stroke-width="1.4" opacity=".75"/></svg>
<svg style="left:1388px;top:871px;" width="20" height="16" viewBox="0 0 20 16"><path d="M2.4 5.6H4.6L8 2.4V13.6L4.6 10.4H2.4Z" fill="none" stroke="#fff" stroke-width="1.2" stroke-linejoin="round"/><path d="M10.4 6A3 3 0 0 1 10.4 10" fill="none" stroke="#fff" stroke-width="1.1"/><path d="M12.8 4A6 6 0 0 1 12.8 12" fill="none" stroke="#fff" stroke-width="1.1" opacity=".55"/><path d="M15.2 2A9 9 0 0 1 15.2 14" fill="none" stroke="#fff" stroke-width="1.1" opacity=".35"/></svg>
<svg style="left:1414px;top:872px;" width="20" height="14" viewBox="0 0 20 14"><rect x="3.4" y="3.6" width="13.4" height="7.6" fill="#fff" stroke="#fff" stroke-width="1"/><rect x="5" y="5.2" width="10.2" height="4.4" fill="#1b1b1d"/><rect x="5.6" y="5.8" width="9" height="3.2" fill="#fff"/><rect x="17.2" y="5.8" width="1.4" height="3.4" fill="#fff"/><path d="M1.6 1.4V4.4H4.6V1.4M2.4 0.4V1.6M3.8 0.4V1.6M3.1 4.4V7" stroke="#fff" stroke-width="1" fill="#1b1b1d"/></svg>
<svg style="left:1555px;top:869px;" width="28" height="28" viewBox="0 0 28 28"><path d="M2 2.2H19.4V14.6H8.4L5.4 17.6V14.6H2Z" fill="#fff"/><path d="M5 5.4H16.4M5 8.2H16.4M5 11H13" stroke="#1b1b1d" stroke-width="1.3"/><circle cx="18.5" cy="18.5" r="7" fill="#262626" stroke="#8a8a8a" stroke-width="1.1"/></svg>
<div style="left:1595px;top:858px;width:1px;height:42px;background:#5a5a5a;"></div>
<svg style="left:722px;top:384.2px;" width="132" height="4" viewBox="0 0 132 4"><polyline points="0.5,0.7 2.5,2.5 4.5,0.7 6.5,2.5 8.5,0.7 10.5,2.5 12.5,0.7 14.5,2.5 16.5,0.7 18.5,2.5 20.5,0.7 22.5,2.5 24.5,0.7 26.5,2.5 28.5,0.7 30.5,2.5 32.5,0.7 34.5,2.5 36.5,0.7 38.5,2.5 40.5,0.7 42.5,2.5 44.5,0.7 46.5,2.5 48.5,0.7 50.5,2.5 52.5,0.7 54.5,2.5 56.5,0.7 58.5,2.5 60.5,0.7 62.5,2.5 64.5,0.7 66.5,2.5 68.5,0.7 70.5,2.5 72.5,0.7 74.5,2.5 76.5,0.7 78.5,2.5 80.5,0.7 82.5,2.5 84.5,0.7 86.5,2.5 88.5,0.7 90.5,2.5 92.5,0.7 94.5,2.5 96.5,0.7 98.5,2.5 100.5,0.7 102.5,2.5 104.5,0.7 106.5,2.5 108.5,0.7 110.5,2.5 112.5,0.7 114.5,2.5 116.5,0.7 118.5,2.5 120.5,0.7 122.5,2.5 124.5,0.7 126.5,2.5 128.5,0.7 130.5,2.5" fill="none" stroke="#dc4a42" stroke-width="1.1"/></svg>
<svg style="left:859px;top:384.2px;" width="107" height="4" viewBox="0 0 107 4"><polyline points="0.5,0.7 2.5,2.5 4.5,0.7 6.5,2.5 8.5,0.7 10.5,2.5 12.5,0.7 14.5,2.5 16.5,0.7 18.5,2.5 20.5,0.7 22.5,2.5 24.5,0.7 26.5,2.5 28.5,0.7 30.5,2.5 32.5,0.7 34.5,2.5 36.5,0.7 38.5,2.5 40.5,0.7 42.5,2.5 44.5,0.7 46.5,2.5 48.5,0.7 50.5,2.5 52.5,0.7 54.5,2.5 56.5,0.7 58.5,2.5 60.5,0.7 62.5,2.5 64.5,0.7 66.5,2.5 68.5,0.7 70.5,2.5 72.5,0.7 74.5,2.5 76.5,0.7 78.5,2.5 80.5,0.7 82.5,2.5 84.5,0.7 86.5,2.5 88.5,0.7 90.5,2.5 92.5,0.7 94.5,2.5 96.5,0.7 98.5,2.5 100.5,0.7 102.5,2.5 104.5,0.7" fill="none" stroke="#dc4a42" stroke-width="1.1"/></svg>
<svg style="left:722px;top:426.8px;" width="156" height="4" viewBox="0 0 156 4"><polyline points="0.5,0.7 2.5,2.5 4.5,0.7 6.5,2.5 8.5,0.7 10.5,2.5 12.5,0.7 14.5,2.5 16.5,0.7 18.5,2.5 20.5,0.7 22.5,2.5 24.5,0.7 26.5,2.5 28.5,0.7 30.5,2.5 32.5,0.7 34.5,2.5 36.5,0.7 38.5,2.5 40.5,0.7 42.5,2.5 44.5,0.7 46.5,2.5 48.5,0.7 50.5,2.5 52.5,0.7 54.5,2.5 56.5,0.7 58.5,2.5 60.5,0.7 62.5,2.5 64.5,0.7 66.5,2.5 68.5,0.7 70.5,2.5 72.5,0.7 74.5,2.5 76.5,0.7 78.5,2.5 80.5,0.7 82.5,2.5 84.5,0.7 86.5,2.5 88.5,0.7 90.5,2.5 92.5,0.7 94.5,2.5 96.5,0.7 98.5,2.5 100.5,0.7 102.5,2.5 104.5,0.7 106.5,2.5 108.5,0.7 110.5,2.5 112.5,0.7 114.5,2.5 116.5,0.7 118.5,2.5 120.5,0.7 122.5,2.5 124.5,0.7 126.5,2.5 128.5,0.7 130.5,2.5 132.5,0.7 134.5,2.5 136.5,0.7 138.5,2.5 140.5,0.7 142.5,2.5 144.5,0.7 146.5,2.5 148.5,0.7 150.5,2.5 152.5,0.7 154.5,2.5" fill="none" stroke="#dc4a42" stroke-width="1.1"/></svg>
<svg style="left:880px;top:426.8px;" width="40" height="4" viewBox="0 0 40 4"><polyline points="0.5,0.7 2.5,2.5 4.5,0.7 6.5,2.5 8.5,0.7 10.5,2.5 12.5,0.7 14.5,2.5 16.5,0.7 18.5,2.5 20.5,0.7 22.5,2.5 24.5,0.7 26.5,2.5 28.5,0.7 30.5,2.5 32.5,0.7 34.5,2.5 36.5,0.7 38.5,2.5" fill="none" stroke="#3c50d8" stroke-width="1.1"/></svg>
<svg style="left:924px;top:426.8px;" width="58" height="4" viewBox="0 0 58 4"><polyline points="0.5,0.7 2.5,2.5 4.5,0.7 6.5,2.5 8.5,0.7 10.5,2.5 12.5,0.7 14.5,2.5 16.5,0.7 18.5,2.5 20.5,0.7 22.5,2.5 24.5,0.7 26.5,2.5 28.5,0.7 30.5,2.5 32.5,0.7 34.5,2.5 36.5,0.7 38.5,2.5 40.5,0.7 42.5,2.5 44.5,0.7 46.5,2.5 48.5,0.7 50.5,2.5 52.5,0.7 54.5,2.5 56.5,0.7" fill="none" stroke="#dc4a42" stroke-width="1.1"/></svg>
<svg style="left:816px;top:470px;" width="169" height="4" viewBox="0 0 169 4"><polyline points="0.5,0.7 2.5,2.5 4.5,0.7 6.5,2.5 8.5,0.7 10.5,2.5 12.5,0.7 14.5,2.5 16.5,0.7 18.5,2.5 20.5,0.7 22.5,2.5 24.5,0.7 26.5,2.5 28.5,0.7 30.5,2.5 32.5,0.7 34.5,2.5 36.5,0.7 38.5,2.5 40.5,0.7 42.5,2.5 44.5,0.7 46.5,2.5 48.5,0.7 50.5,2.5 52.5,0.7 54.5,2.5 56.5,0.7 58.5,2.5 60.5,0.7 62.5,2.5 64.5,0.7 66.5,2.5 68.5,0.7 70.5,2.5 72.5,0.7 74.5,2.5 76.5,0.7 78.5,2.5 80.5,0.7 82.5,2.5 84.5,0.7 86.5,2.5 88.5,0.7 90.5,2.5 92.5,0.7 94.5,2.5 96.5,0.7 98.5,2.5 100.5,0.7 102.5,2.5 104.5,0.7 106.5,2.5 108.5,0.7 110.5,2.5 112.5,0.7 114.5,2.5 116.5,0.7 118.5,2.5 120.5,0.7 122.5,2.5 124.5,0.7 126.5,2.5 128.5,0.7 130.5,2.5 132.5,0.7 134.5,2.5 136.5,0.7 138.5,2.5 140.5,0.7 142.5,2.5 144.5,0.7 146.5,2.5 148.5,0.7 150.5,2.5 152.5,0.7 154.5,2.5 156.5,0.7 158.5,2.5 160.5,0.7 162.5,2.5 164.5,0.7 166.5,2.5" fill="none" stroke="#dc4a42" stroke-width="1.1"/></svg>
<svg style="left:540px;top:505.7px;" width="79" height="4" viewBox="0 0 79 4"><polyline points="0.5,0.7 2.5,2.5 4.5,0.7 6.5,2.5 8.5,0.7 10.5,2.5 12.5,0.7 14.5,2.5 16.5,0.7 18.5,2.5 20.5,0.7 22.5,2.5 24.5,0.7 26.5,2.5 28.5,0.7 30.5,2.5 32.5,0.7 34.5,2.5 36.5,0.7 38.5,2.5 40.5,0.7 42.5,2.5 44.5,0.7 46.5,2.5 48.5,0.7 50.5,2.5 52.5,0.7 54.5,2.5 56.5,0.7 58.5,2.5 60.5,0.7 62.5,2.5 64.5,0.7 66.5,2.5 68.5,0.7 70.5,2.5 72.5,0.7 74.5,2.5 76.5,0.7" fill="none" stroke="#dc4a42" stroke-width="1.1"/></svg>
<svg style="left:627px;top:505.7px;" width="89" height="4" viewBox="0 0 89 4"><polyline points="0.5,0.7 2.5,2.5 4.5,0.7 6.5,2.5 8.5,0.7 10.5,2.5 12.5,0.7 14.5,2.5 16.5,0.7 18.5,2.5 20.5,0.7 22.5,2.5 24.5,0.7 26.5,2.5 28.5,0.7 30.5,2.5 32.5,0.7 34.5,2.5 36.5,0.7 38.5,2.5 40.5,0.7 42.5,2.5 44.5,0.7 46.5,2.5 48.5,0.7 50.5,2.5 52.5,0.7 54.5,2.5 56.5,0.7 58.5,2.5 60.5,0.7 62.5,2.5 64.5,0.7 66.5,2.5 68.5,0.7 70.5,2.5 72.5,0.7 74.5,2.5 76.5,0.7 78.5,2.5 80.5,0.7 82.5,2.5 84.5,0.7 86.5,2.5" fill="none" stroke="#dc4a42" stroke-width="1.1"/></svg>
<svg style="left:743px;top:505.7px;" width="89" height="4" viewBox="0 0 89 4"><polyline points="0.5,0.7 2.5,2.5 4.5,0.7 6.5,2.5 8.5,0.7 10.5,2.5 12.5,0.7 14.5,2.5 16.5,0.7 18.5,2.5 20.5,0.7 22.5,2.5 24.5,0.7 26.5,2.5 28.5,0.7 30.5,2.5 32.5,0.7 34.5,2.5 36.5,0.7 38.5,2.5 40.5,0.7 42.5,2.5 44.5,0.7 46.5,2.5 48.5,0.7 50.5,2.5 52.5,0.7 54.5,2.5 56.5,0.7 58.5,2.5 60.5,0.7 62.5,2.5 64.5,0.7 66.5,2.5 68.5,0.7 70.5,2.5 72.5,0.7 74.5,2.5 76.5,0.7 78.5,2.5 80.5,0.7 82.5,2.5 84.5,0.7 86.5,2.5" fill="none" stroke="#dc4a42" stroke-width="1.1"/></svg>
<svg style="left:836px;top:505.7px;" width="81" height="4" viewBox="0 0 81 4"><polyline points="0.5,0.7 2.5,2.5 4.5,0.7 6.5,2.5 8.5,0.7 10.5,2.5 12.5,0.7 14.5,2.5 16.5,0.7 18.5,2.5 20.5,0.7 22.5,2.5 24.5,0.7 26.5,2.5 28.5,0.7 30.5,2.5 32.5,0.7 34.5,2.5 36.5,0.7 38.5,2.5 40.5,0.7 42.5,2.5 44.5,0.7 46.5,2.5 48.5,0.7 50.5,2.5 52.5,0.7 54.5,2.5 56.5,0.7 58.5,2.5 60.5,0.7 62.5,2.5 64.5,0.7 66.5,2.5 68.5,0.7 70.5,2.5 72.5,0.7 74.5,2.5 76.5,0.7 78.5,2.5" fill="none" stroke="#dc4a42" stroke-width="1.1"/></svg>
<svg style="left:966px;top:505.7px;" width="46" height="4" viewBox="0 0 46 4"><polyline points="0.5,0.7 2.5,2.5 4.5,0.7 6.5,2.5 8.5,0.7 10.5,2.5 12.5,0.7 14.5,2.5 16.5,0.7 18.5,2.5 20.5,0.7 22.5,2.5 24.5,0.7 26.5,2.5 28.5,0.7 30.5,2.5 32.5,0.7 34.5,2.5 36.5,0.7 38.5,2.5 40.5,0.7 42.5,2.5 44.5,0.7" fill="none" stroke="#dc4a42" stroke-width="1.1"/></svg>
<svg style="left:1028px;top:505.7px;" width="117" height="4" viewBox="0 0 117 4"><polyline points="0.5,0.7 2.5,2.5 4.5,0.7 6.5,2.5 8.5,0.7 10.5,2.5 12.5,0.7 14.5,2.5 16.5,0.7 18.5,2.5 20.5,0.7 22.5,2.5 24.5,0.7 26.5,2.5 28.5,0.7 30.5,2.5 32.5,0.7 34.5,2.5 36.5,0.7 38.5,2.5 40.5,0.7 42.5,2.5 44.5,0.7 46.5,2.5 48.5,0.7 50.5,2.5 52.5,0.7 54.5,2.5 56.5,0.7 58.5,2.5 60.5,0.7 62.5,2.5 64.5,0.7 66.5,2.5 68.5,0.7 70.5,2.5 72.5,0.7 74.5,2.5 76.5,0.7 78.5,2.5 80.5,0.7 82.5,2.5 84.5,0.7 86.5,2.5 88.5,0.7 90.5,2.5 92.5,0.7 94.5,2.5 96.5,0.7 98.5,2.5 100.5,0.7 102.5,2.5 104.5,0.7 106.5,2.5 108.5,0.7 110.5,2.5 112.5,0.7 114.5,2.5" fill="none" stroke="#dc4a42" stroke-width="1.1"/></svg>
<svg style="left:512px;top:528.6px;" width="67" height="4" viewBox="0 0 67 4"><polyline points="0.5,0.7 2.5,2.5 4.5,0.7 6.5,2.5 8.5,0.7 10.5,2.5 12.5,0.7 14.5,2.5 16.5,0.7 18.5,2.5 20.5,0.7 22.5,2.5 24.5,0.7 26.5,2.5 28.5,0.7 30.5,2.5 32.5,0.7 34.5,2.5 36.5,0.7 38.5,2.5 40.5,0.7 42.5,2.5 44.5,0.7 46.5,2.5 48.5,0.7 50.5,2.5 52.5,0.7 54.5,2.5 56.5,0.7 58.5,2.5 60.5,0.7 62.5,2.5 64.5,0.7" fill="none" stroke="#dc4a42" stroke-width="1.1"/></svg>
<svg style="left:902px;top:528.6px;" width="102" height="4" viewBox="0 0 102 4"><polyline points="0.5,0.7 2.5,2.5 4.5,0.7 6.5,2.5 8.5,0.7 10.5,2.5 12.5,0.7 14.5,2.5 16.5,0.7 18.5,2.5 20.5,0.7 22.5,2.5 24.5,0.7 26.5,2.5 28.5,0.7 30.5,2.5 32.5,0.7 34.5,2.5 36.5,0.7 38.5,2.5 40.5,0.7 42.5,2.5 44.5,0.7 46.5,2.5 48.5,0.7 50.5,2.5 52.5,0.7 54.5,2.5 56.5,0.7 58.5,2.5 60.5,0.7 62.5,2.5 64.5,0.7 66.5,2.5 68.5,0.7 70.5,2.5 72.5,0.7 74.5,2.5 76.5,0.7 78.5,2.5 80.5,0.7 82.5,2.5 84.5,0.7 86.5,2.5 88.5,0.7 90.5,2.5 92.5,0.7 94.5,2.5 96.5,0.7 98.5,2.5 100.5,0.7" fill="none" stroke="#dc4a42" stroke-width="1.1"/></svg>
<svg style="left:1030px;top:528.6px;" width="53" height="4" viewBox="0 0 53 4"><polyline points="0.5,0.7 2.5,2.5 4.5,0.7 6.5,2.5 8.5,0.7 10.5,2.5 12.5,0.7 14.5,2.5 16.5,0.7 18.5,2.5 20.5,0.7 22.5,2.5 24.5,0.7 26.5,2.5 28.5,0.7 30.5,2.5 32.5,0.7 34.5,2.5 36.5,0.7 38.5,2.5 40.5,0.7 42.5,2.5 44.5,0.7 46.5,2.5 48.5,0.7 50.5,2.5" fill="none" stroke="#dc4a42" stroke-width="1.1"/></svg>
<svg style="left:1087px;top:528.6px;" width="89" height="4" viewBox="0 0 89 4"><polyline points="0.5,0.7 2.5,2.5 4.5,0.7 6.5,2.5 8.5,0.7 10.5,2.5 12.5,0.7 14.5,2.5 16.5,0.7 18.5,2.5 20.5,0.7 22.5,2.5 24.5,0.7 26.5,2.5 28.5,0.7 30.5,2.5 32.5,0.7 34.5,2.5 36.5,0.7 38.5,2.5 40.5,0.7 42.5,2.5 44.5,0.7 46.5,2.5 48.5,0.7 50.5,2.5 52.5,0.7 54.5,2.5 56.5,0.7 58.5,2.5 60.5,0.7 62.5,2.5 64.5,0.7 66.5,2.5 68.5,0.7 70.5,2.5 72.5,0.7 74.5,2.5 76.5,0.7 78.5,2.5 80.5,0.7 82.5,2.5 84.5,0.7 86.5,2.5" fill="none" stroke="#dc4a42" stroke-width="1.1"/></svg>
<svg style="left:646px;top:551px;" width="88" height="4" viewBox="0 0 88 4"><polyline points="0.5,0.7 2.5,2.5 4.5,0.7 6.5,2.5 8.5,0.7 10.5,2.5 12.5,0.7 14.5,2.5 16.5,0.7 18.5,2.5 20.5,0.7 22.5,2.5 24.5,0.7 26.5,2.5 28.5,0.7 30.5,2.5 32.5,0.7 34.5,2.5 36.5,0.7 38.5,2.5 40.5,0.7 42.5,2.5 44.5,0.7 46.5,2.5 48.5,0.7 50.5,2.5 52.5,0.7 54.5,2.5 56.5,0.7 58.5,2.5 60.5,0.7 62.5,2.5 64.5,0.7 66.5,2.5 68.5,0.7 70.5,2.5 72.5,0.7 74.5,2.5 76.5,0.7 78.5,2.5 80.5,0.7 82.5,2.5 84.5,0.7 86.5,2.5" fill="none" stroke="#dc4a42" stroke-width="1.1"/></svg>
<svg style="left:738px;top:551px;" width="82" height="4" viewBox="0 0 82 4"><polyline points="0.5,0.7 2.5,2.5 4.5,0.7 6.5,2.5 8.5,0.7 10.5,2.5 12.5,0.7 14.5,2.5 16.5,0.7 18.5,2.5 20.5,0.7 22.5,2.5 24.5,0.7 26.5,2.5 28.5,0.7 30.5,2.5 32.5,0.7 34.5,2.5 36.5,0.7 38.5,2.5 40.5,0.7 42.5,2.5 44.5,0.7 46.5,2.5 48.5,0.7 50.5,2.5 52.5,0.7 54.5,2.5 56.5,0.7 58.5,2.5 60.5,0.7 62.5,2.5 64.5,0.7 66.5,2.5 68.5,0.7 70.5,2.5 72.5,0.7 74.5,2.5 76.5,0.7 78.5,2.5 80.5,0.7" fill="none" stroke="#dc4a42" stroke-width="1.1"/></svg>
<svg style="left:622px;top:594.8px;" width="67" height="4" viewBox="0 0 67 4"><polyline points="0.5,0.7 2.5,2.5 4.5,0.7 6.5,2.5 8.5,0.7 10.5,2.5 12.5,0.7 14.5,2.5 16.5,0.7 18.5,2.5 20.5,0.7 22.5,2.5 24.5,0.7 26.5,2.5 28.5,0.7 30.5,2.5 32.5,0.7 34.5,2.5 36.5,0.7 38.5,2.5 40.5,0.7 42.5,2.5 44.5,0.7 46.5,2.5 48.5,0.7 50.5,2.5 52.5,0.7 54.5,2.5 56.5,0.7 58.5,2.5 60.5,0.7 62.5,2.5 64.5,0.7" fill="none" stroke="#dc4a42" stroke-width="1.1"/></svg>
<svg style="left:858px;top:594.8px;" width="86" height="4" viewBox="0 0 86 4"><polyline points="0.5,0.7 2.5,2.5 4.5,0.7 6.5,2.5 8.5,0.7 10.5,2.5 12.5,0.7 14.5,2.5 16.5,0.7 18.5,2.5 20.5,0.7 22.5,2.5 24.5,0.7 26.5,2.5 28.5,0.7 30.5,2.5 32.5,0.7 34.5,2.5 36.5,0.7 38.5,2.5 40.5,0.7 42.5,2.5 44.5,0.7 46.5,2.5 48.5,0.7 50.5,2.5 52.5,0.7 54.5,2.5 56.5,0.7 58.5,2.5 60.5,0.7 62.5,2.5 64.5,0.7 66.5,2.5 68.5,0.7 70.5,2.5 72.5,0.7 74.5,2.5 76.5,0.7 78.5,2.5 80.5,0.7 82.5,2.5 84.5,0.7" fill="none" stroke="#dc4a42" stroke-width="1.1"/></svg>
<svg style="left:996px;top:594.8px;" width="91" height="4" viewBox="0 0 91 4"><polyline points="0.5,0.7 2.5,2.5 4.5,0.7 6.5,2.5 8.5,0.7 10.5,2.5 12.5,0.7 14.5,2.5 16.5,0.7 18.5,2.5 20.5,0.7 22.5,2.5 24.5,0.7 26.5,2.5 28.5,0.7 30.5,2.5 32.5,0.7 34.5,2.5 36.5,0.7 38.5,2.5 40.5,0.7 42.5,2.5 44.5,0.7 46.5,2.5 48.5,0.7 50.5,2.5 52.5,0.7 54.5,2.5 56.5,0.7 58.5,2.5 60.5,0.7 62.5,2.5 64.5,0.7 66.5,2.5 68.5,0.7 70.5,2.5 72.5,0.7 74.5,2.5 76.5,0.7 78.5,2.5 80.5,0.7 82.5,2.5 84.5,0.7 86.5,2.5 88.5,0.7" fill="none" stroke="#dc4a42" stroke-width="1.1"/></svg>
<svg style="left:628px;top:639.6px;" width="112" height="4" viewBox="0 0 112 4"><polyline points="0.5,0.7 2.5,2.5 4.5,0.7 6.5,2.5 8.5,0.7 10.5,2.5 12.5,0.7 14.5,2.5 16.5,0.7 18.5,2.5 20.5,0.7 22.5,2.5 24.5,0.7 26.5,2.5 28.5,0.7 30.5,2.5 32.5,0.7 34.5,2.5 36.5,0.7 38.5,2.5 40.5,0.7 42.5,2.5 44.5,0.7 46.5,2.5 48.5,0.7 50.5,2.5 52.5,0.7 54.5,2.5 56.5,0.7 58.5,2.5 60.5,0.7 62.5,2.5 64.5,0.7 66.5,2.5 68.5,0.7 70.5,2.5 72.5,0.7 74.5,2.5 76.5,0.7 78.5,2.5 80.5,0.7 82.5,2.5 84.5,0.7 86.5,2.5 88.5,0.7 90.5,2.5 92.5,0.7 94.5,2.5 96.5,0.7 98.5,2.5 100.5,0.7 102.5,2.5 104.5,0.7 106.5,2.5 108.5,0.7 110.5,2.5" fill="none" stroke="#dc4a42" stroke-width="1.1"/></svg>
<svg style="left:743px;top:639.6px;" width="53" height="4" viewBox="0 0 53 4"><polyline points="0.5,0.7 2.5,2.5 4.5,0.7 6.5,2.5 8.5,0.7 10.5,2.5 12.5,0.7 14.5,2.5 16.5,0.7 18.5,2.5 20.5,0.7 22.5,2.5 24.5,0.7 26.5,2.5 28.5,0.7 30.5,2.5 32.5,0.7 34.5,2.5 36.5,0.7 38.5,2.5 40.5,0.7 42.5,2.5 44.5,0.7 46.5,2.5 48.5,0.7 50.5,2.5" fill="none" stroke="#dc4a42" stroke-width="1.1"/></svg>
<svg style="left:862px;top:639.6px;" width="70" height="4" viewBox="0 0 70 4"><polyline points="0.5,0.7 2.5,2.5 4.5,0.7 6.5,2.5 8.5,0.7 10.5,2.5 12.5,0.7 14.5,2.5 16.5,0.7 18.5,2.5 20.5,0.7 22.5,2.5 24.5,0.7 26.5,2.5 28.5,0.7 30.5,2.5 32.5,0.7 34.5,2.5 36.5,0.7 38.5,2.5 40.5,0.7 42.5,2.5 44.5,0.7 46.5,2.5 48.5,0.7 50.5,2.5 52.5,0.7 54.5,2.5 56.5,0.7 58.5,2.5 60.5,0.7 62.5,2.5 64.5,0.7 66.5,2.5 68.5,0.7" fill="none" stroke="#dc4a42" stroke-width="1.1"/></svg>
<svg style="left:935px;top:639.6px;" width="26" height="4" viewBox="0 0 26 4"><polyline points="0.5,0.7 2.5,2.5 4.5,0.7 6.5,2.5 8.5,0.7 10.5,2.5 12.5,0.7 14.5,2.5 16.5,0.7 18.5,2.5 20.5,0.7 22.5,2.5 24.5,0.7" fill="none" stroke="#dc4a42" stroke-width="1.1"/></svg>
<svg style="left:988px;top:639.6px;" width="59" height="4" viewBox="0 0 59 4"><polyline points="0.5,0.7 2.5,2.5 4.5,0.7 6.5,2.5 8.5,0.7 10.5,2.5 12.5,0.7 14.5,2.5 16.5,0.7 18.5,2.5 20.5,0.7 22.5,2.5 24.5,0.7 26.5,2.5 28.5,0.7 30.5,2.5 32.5,0.7 34.5,2.5 36.5,0.7 38.5,2.5 40.5,0.7 42.5,2.5 44.5,0.7 46.5,2.5 48.5,0.7 50.5,2.5 52.5,0.7 54.5,2.5 56.5,0.7" fill="none" stroke="#dc4a42" stroke-width="1.1"/></svg>
<svg style="left:534px;top:726px;" width="100" height="4" viewBox="0 0 100 4"><polyline points="0.5,0.7 2.5,2.5 4.5,0.7 6.5,2.5 8.5,0.7 10.5,2.5 12.5,0.7 14.5,2.5 16.5,0.7 18.5,2.5 20.5,0.7 22.5,2.5 24.5,0.7 26.5,2.5 28.5,0.7 30.5,2.5 32.5,0.7 34.5,2.5 36.5,0.7 38.5,2.5 40.5,0.7 42.5,2.5 44.5,0.7 46.5,2.5 48.5,0.7 50.5,2.5 52.5,0.7 54.5,2.5 56.5,0.7 58.5,2.5 60.5,0.7 62.5,2.5 64.5,0.7 66.5,2.5 68.5,0.7 70.5,2.5 72.5,0.7 74.5,2.5 76.5,0.7 78.5,2.5 80.5,0.7 82.5,2.5 84.5,0.7 86.5,2.5 88.5,0.7 90.5,2.5 92.5,0.7 94.5,2.5 96.5,0.7 98.5,2.5" fill="none" stroke="#dc4a42" stroke-width="1.1"/></svg>
<span id="t0" class="t" style="left:241px;top:10.50px;font:13px/1 'Liberation Sans',sans-serif;color:#fff;transform:scaleX(0.9608);">8 клас НУШ, інформатика КТП (2 год) - Word (Сбой активации продукта)</span>
<span id="t1" class="t" style="left:790px;top:12.00px;font:12px/1 'Liberation Sans',sans-serif;color:#b9c7e1;transform:scaleX(0.8862);">Работа с таблицами</span>
<span id="t2" class="t" style="left:14px;top:41.00px;font:12px/1 'Liberation Sans',sans-serif;color:#ffffff;transform:scaleX(1.0503);">Файл</span>
<span id="t3" class="t" style="left:146px;top:41.00px;font:12px/1 'Liberation Sans',sans-serif;color:#ffffff;transform:scaleX(0.9863);">Вставка</span>
<span id="t4" class="t" style="left:214px;top:41.00px;font:12px/1 'Liberation Sans',sans-serif;color:#ffffff;transform:scaleX(1.0658);">Дизайн</span>
<span id="t5" class="t" style="left:281px;top:41.00px;font:12px/1 'Liberation Sans',sans-serif;color:#ffffff;transform:scaleX(1.0598);">Макет</span>
<span id="t6" class="t" style="left:340px;top:41.00px;font:12px/1 'Liberation Sans',sans-serif;color:#ffffff;transform:scaleX(1.0178);">Ссылки</span>
<span id="t7" class="t" style="left:407px;top:41.00px;font:12px/1 'Liberation Sans',sans-serif;color:#ffffff;">Рассылки</span>
<span id="t8" class="t" style="left:485px;top:41.00px;font:12px/1 'Liberation Sans',sans-serif;color:#ffffff;transform:scaleX(1.0683);">Рецензирование</span>
<span id="t9" class="t" style="left:608px;top:41.00px;font:12px/1 'Liberation Sans',sans-serif;color:#ffffff;transform:scaleX(1.0129);">Вид</span>
<span id="t10" class="t" style="left:654px;top:41.00px;font:12px/1 'Liberation Sans',sans-serif;color:#ffffff;transform:scaleX(0.9788);">Foxit Reader PDF</span>
<span id="t11" class="t" style="left:774px;top:41.00px;font:12px/1 'Liberation Sans',sans-serif;color:#ffffff;transform:scaleX(1.0669);">Конструктор</span>
<span id="t12" class="t" style="left:870px;top:41.00px;font:12px/1 'Liberation Sans',sans-serif;color:#ffffff;transform:scaleX(1.0598);">Макет</span>
<span id="t13" class="t" style="left:75px;top:41.00px;font:12px/1 'Liberation Sans',sans-serif;color:#3e5684;transform:scaleX(1.0287);">Главная</span>
<span id="t14" class="t" style="left:947px;top:41.00px;font:12px/1 'Liberation Sans',sans-serif;color:#c5d3ea;transform:scaleX(1.0101);">Что вы хотите сделать?</span>
<span id="t15" class="t" style="left:1436px;top:41.00px;font:12px/1 'Liberation Sans',sans-serif;color:#ffffff;transform:scaleX(0.9942);">Вход</span>
<span id="t16" class="t" style="left:1496px;top:41.00px;font:12px/1 'Liberation Sans',sans-serif;color:#ffffff;transform:scaleX(1.0419);">Общий доступ</span>
<span id="t17" class="t" style="left:5.8px;top:102.20px;font:12px/1 'Liberation Sans',sans-serif;color:#444444;transform:scaleX(0.9789);">Вставить</span>
<span id="t18" class="t" style="left:80px;top:67.80px;font:12px/1 'Liberation Sans',sans-serif;color:#a0a0a0;transform:scaleX(1.0304);">Вырезать</span>
<span id="t19" class="t" style="left:80px;top:91.20px;font:12px/1 'Liberation Sans',sans-serif;color:#a0a0a0;transform:scaleX(1.0832);">Копировать</span>
<span id="t20" class="t" style="left:80px;top:114.20px;font:12px/1 'Liberation Sans',sans-serif;color:#444444;transform:scaleX(1.0780);">Формат по образцу</span>
<span id="t21" class="t" style="left:57px;top:137.80px;font:10.7px/1 'Liberation Sans',sans-serif;color:#666;transform:scaleX(1.0052);">Буфер обмена</span>
<span id="t22" class="t" style="left:305px;top:137.80px;font:10.7px/1 'Liberation Sans',sans-serif;color:#666;transform:scaleX(1.0235);">Шрифт</span>
<span id="t23" class="t" style="left:541px;top:137.80px;font:10.7px/1 'Liberation Sans',sans-serif;color:#666;">Абзац</span>
<span id="t24" class="t" style="left:1037px;top:137.80px;font:10.7px/1 'Liberation Sans',sans-serif;color:#666;transform:scaleX(0.9092);">Стили</span>
<span id="t25" class="t" style="left:1457px;top:137.80px;font:10.7px/1 'Liberation Sans',sans-serif;color:#666;transform:scaleX(0.9825);">Редактирование</span>
<span id="t26" class="t" style="left:1474px;top:66.90px;font:12px/1 'Liberation Sans',sans-serif;color:#444444;transform:scaleX(1.0219);">Найти</span>
<span id="t27" class="t" style="left:1474px;top:89.40px;font:12px/1 'Liberation Sans',sans-serif;color:#444444;transform:scaleX(1.0197);">Заменить</span>
<span id="t28" class="t" style="left:1474px;top:111.90px;font:12px/1 'Liberation Sans',sans-serif;color:#444444;transform:scaleX(0.9935);">Выделить</span>
<span id="t29" class="t" style="left:211.7px;top:76.50px;font:12px/1 'Liberation Sans',sans-serif;color:#444444;transform:scaleX(0.9712);">Times New R</span>
<span id="t30" class="t" style="left:302px;top:76.50px;font:12px/1 'Liberation Sans',sans-serif;color:#444444;transform:scaleX(0.8758);">14</span>
<span id="t31" class="t" style="left:680.6px;top:106.40px;font:12px/1 'Liberation Sans',sans-serif;color:#666;transform:scaleX(1.0250);">¶ Обычный</span>
<span id="t32" class="t" style="left:758px;top:106.40px;font:12px/1 'Liberation Sans',sans-serif;color:#666;transform:scaleX(1.0065);">¶ Без инт...</span>
<span id="t33" class="t" style="left:832px;top:106.40px;font:12px/1 'Liberation Sans',sans-serif;color:#666;transform:scaleX(1.0217);">Заголово...</span>
<span id="t34" class="t" style="left:907px;top:106.40px;font:12px/1 'Liberation Sans',sans-serif;color:#666;transform:scaleX(1.0103);">Заголово...</span>
<span id="t35" class="t" style="left:983.8px;top:106.40px;font:12px/1 'Liberation Sans',sans-serif;color:#666;transform:scaleX(1.0492);">Заголовок</span>
<span id="t36" class="t" style="left:1056.3px;top:106.40px;font:12px/1 'Liberation Sans',sans-serif;color:#666;transform:scaleX(1.0235);">Подзагол...</span>
<span id="t37" class="t" style="left:1132.5px;top:106.40px;font:12px/1 'Liberation Sans',sans-serif;color:#666;transform:scaleX(0.9875);">Слабое в...</span>
<span id="t38" class="t" style="left:1206.3px;top:106.40px;font:12px/1 'Liberation Sans',sans-serif;color:#666;transform:scaleX(1.0095);">Выделение</span>
<span id="t39" class="t" style="left:1283.8px;top:106.40px;font:12px/1 'Liberation Sans',sans-serif;color:#666;transform:scaleX(0.9930);">Сильное...</span>
<span id="t40" class="t" style="left:1364.5px;top:106.40px;font:12px/1 'Liberation Sans',sans-serif;color:#666;transform:scaleX(1.0332);">Строгий</span>
<span id="t41" class="t" style="left:646.6px;top:272.00px;font:bold 27.8px/1 'Liberation Serif',serif;color:#000;transform:scaleX(1.0045);">КАЛЕНДАРНО-ТЕМАТИЧНЕ</span>
<span id="t42" class="t" style="left:740.8px;top:317.00px;font:bold 27.8px/1 'Liberation Serif',serif;color:#000;">ПЛАНУВАННЯ</span>
<span id="t43" class="t" style="left:722.5px;top:362.00px;font:25px/1 'Liberation Serif',serif;color:#000;">навчального матеріалу</span>
<span id="t44" class="t" style="left:705.9px;top:404.00px;font:italic bold 25px/1 'Liberation Serif',serif;color:#000;transform:scaleX(1.0054);">з інформатики у</span>
<span id="t45" class="t" style="left:906.2px;top:404.00px;font:italic bold 25px/1 'Liberation Serif',serif;color:#000;transform:scaleX(0.9801);">8 класі</span>
<span id="t46" class="t" style="left:703.6px;top:446.00px;font:italic bold 25px/1 'Liberation Serif',serif;color:#000;transform:scaleX(0.9940);">2025/2026 навчальний рік</span>
<span id="t47" class="t" style="left:540.5px;top:488.00px;font:italic 19.4px/1 'Liberation Serif',serif;color:#000;">Складено  відповідно до навчальної програми для 8 класу з інформатики,</span>
<span id="t48" class="t" style="left:512px;top:510.00px;font:italic 19.4px/1 'Liberation Serif',serif;color:#000;">укладач</span>
<span id="t49" class="t" style="left:884px;top:510.00px;font:italic 19.4px/1 'Liberation Serif',serif;color:#000;transform:scaleX(1.0073);">.,  розробленої на основі Модельної</span>
<span id="t50" class="t" style="left:645.5px;top:533.00px;font:italic 19.4px/1 'Liberation Serif',serif;color:#000;">навчальної програми  Інформатика. 7–9 класи»</span>
<span id="t51" class="t" style="left:678.3px;top:555.00px;font:italic 19.4px/1 'Liberation Serif',serif;color:#000;">«для закладів загальної середньої освіти</span>
<span id="t52" class="t" style="left:550.8px;top:578.00px;font:italic 19.4px/1 'Liberation Serif',serif;color:#000;transform:scaleX(1.0062);">(автори Ривкінд Й. Я., Лисенко Т. І., Чернікова Л. А., Шакотько В. В.)</span>
<span id="t53" class="t" style="left:604.2px;top:600.00px;font:19.4px/1 'Liberation Serif',serif;color:#000;transform:scaleX(1.0112);">яка рекомендована Міністерством освіти і науки України</span>
<span id="t54" class="t" style="left:572.5px;top:622.00px;font:19.4px/1 'Liberation Serif',serif;color:#000;transform:scaleX(1.0057);">(наказ Міністерства освіти і науки України від 16 серпня № 1001)</span>
<span id="t55" class="t" style="left:534.9px;top:702.00px;font:bold 25px/1 'Liberation Serif',serif;color:#000;">Вчитель:</span>
<span id="t56" class="t" style="left:1182.3px;top:754.00px;font:21.5px/1 'Liberation Sans',sans-serif;color:rgba(0,0,0,0.23);transform:scaleX(0.9648);">Активація Windows</span>
<span id="t57" class="t" style="left:1182px;top:780.50px;font:15.5px/1 'Liberation Sans',sans-serif;color:rgba(0,0,0,0.2);transform:scaleX(0.9601);">Перейдіть до розділу "Настройки", щоб активувати</span>
<span id="t58" class="t" style="left:1182px;top:801.50px;font:15.5px/1 'Liberation Sans',sans-serif;color:rgba(0,0,0,0.2);transform:scaleX(0.9600);">Windows.</span>
<span id="t59" class="t" style="left:7.1px;top:841.30px;font:10.7px/1 'Liberation Sans',sans-serif;color:#666;transform:scaleX(0.9837);">Страница 1 из 6</span>
<span id="t60" class="t" style="left:102.2px;top:841.30px;font:10.7px/1 'Liberation Sans',sans-serif;color:#666;transform:scaleX(0.9912);">Число слов: 876</span>
<span id="t61" class="t" style="left:228.4px;top:841.30px;font:10.7px/1 'Liberation Sans',sans-serif;color:#666;">украинский</span>
<span id="t62" class="t" style="left:1567.8px;top:841.30px;font:10.7px/1 'Liberation Sans',sans-serif;color:#666;transform:scaleX(0.9033);">100%</span>
<span id="t63" class="t" style="left:92.3px;top:871.80px;font:15px/1 'Liberation Sans',sans-serif;color:#3a3a3a;transform:scaleX(1.0611);">Пошук</span>
<span id="t64" class="t" style="left:1443.4px;top:874.20px;font:12.5px/1 'Liberation Sans',sans-serif;color:#fff;transform:scaleX(0.9167);">УКР</span>
<span id="t65" class="t" style="left:1495px;top:864.00px;font:12.5px/1 'Liberation Sans',sans-serif;color:#fff;transform:scaleX(0.8919);">15:06</span>
<span id="t66" class="t" style="left:1480.2px;top:883.40px;font:12.5px/1 'Liberation Sans',sans-serif;color:#fff;transform:scaleX(0.9223);">22.08.2025</span>
<span id="t67" class="t" style="left:348.6px;top:76.50px;font:12.6px/1 'Liberation Sans',sans-serif;color:#444444;transform:scaleX(1.0706);">A</span>
<span id="t68" class="t" style="left:369.4px;top:77.30px;font:12px/1 'Liberation Sans',sans-serif;color:#444444;transform:scaleX(1.0604);">A</span>
<span id="t69" class="t" style="left:396.4px;top:75.40px;font:12px/1 'Liberation Sans',sans-serif;color:#444444;transform:scaleX(0.9940);">Aa</span>
<span id="t70" class="t" style="left:437.3px;top:74.00px;font:11px/1 'Liberation Sans',sans-serif;color:#555;transform:scaleX(0.9668);">A</span>
<span id="t71" class="t" style="left:212.7px;top:107.20px;font:bold 12.6px/1 'Liberation Sans',sans-serif;color:#333;transform:scaleX(1.1676);">Ж</span>
<span id="t72" class="t" style="left:235.4px;top:107.20px;font:italic bold 12.6px/1 'Liberation Sans',sans-serif;color:#333;transform:scaleX(1.3032);">К</span>
<span id="t73" class="t" style="left:258.2px;top:107.20px;font:12.6px/1 'Liberation Sans',sans-serif;color:#333;transform:scaleX(1.0468);">Ч</span>
<span id="t74" class="t" style="left:286.7px;top:106.90px;font:11.6px/1 'Liberation Sans',sans-serif;color:#555;transform:scaleX(0.9036);">abc</span>
<span id="t75" class="t" style="left:311px;top:105.90px;font:bold 13px/1 'Liberation Sans',sans-serif;color:#333;transform:scaleX(1.0782);">x</span>
<span id="t76" class="t" style="left:319.4px;top:114.10px;font:bold 6.4px/1 'Liberation Sans',sans-serif;color:#4a7ab8;transform:scaleX(0.9263);">2</span>
<span id="t77" class="t" style="left:332.3px;top:105.90px;font:bold 13px/1 'Liberation Sans',sans-serif;color:#333;transform:scaleX(1.0920);">x</span>
<span id="t78" class="t" style="left:340.7px;top:105.70px;font:bold 6.4px/1 'Liberation Sans',sans-serif;color:#4a7ab8;transform:scaleX(1.0105);">2</span>
<span id="t79" class="t" style="left:391.2px;top:102.90px;font:bold 9.6px/1 'Liberation Sans',sans-serif;color:#4a4a4a;transform:scaleX(0.7141);">ab</span>
<span id="t80" class="t" style="left:426.8px;top:104.20px;font:13.2px/1 'Liberation Sans',sans-serif;color:#3c3c3c;transform:scaleX(1.1595);-webkit-text-stroke:0.4px #3c3c3c;">A</span>
<span id="t81" class="t" style="left:1454.9px;top:86.30px;font:9.4px/1 'Liberation Sans',sans-serif;color:#444;transform:scaleX(0.9389);">a</span>
<span id="t82" class="t" style="left:1459.8px;top:86.30px;font:9.4px/1 'Liberation Sans',sans-serif;color:#8a5fb0;">b</span>
<span id="t83" class="t" style="left:1461.6px;top:94.50px;font:9.4px/1 'Liberation Sans',sans-serif;color:#444;transform:scaleX(0.8431);">a</span>
<span id="t84" class="t" style="left:1466px;top:94.50px;font:9.4px/1 'Liberation Sans',sans-serif;color:#4a7ab8;transform:scaleX(0.9813);">c</span>
<span id="t85" class="t" style="left:496.4px;top:73.30px;font:bold 5.6px/1 'Liberation Sans',sans-serif;color:#3f6fb3;transform:scaleX(0.9600);">1</span>
<span id="t86" class="t" style="left:496.4px;top:79.20px;font:bold 5.6px/1 'Liberation Sans',sans-serif;color:#3f6fb3;transform:scaleX(0.9600);">2</span>
<span id="t87" class="t" style="left:496.4px;top:85.00px;font:bold 5.6px/1 'Liberation Sans',sans-serif;color:#3f6fb3;transform:scaleX(0.9600);">3</span>
<span id="t88" class="t" style="left:529.3px;top:73.30px;font:bold 5.6px/1 'Liberation Sans',sans-serif;color:#3f6fb3;transform:scaleX(0.8640);">1</span>
<span id="t89" class="t" style="left:532.6px;top:78.20px;font:bold 6.4px/1 'Liberation Sans',sans-serif;color:#3f6fb3;transform:scaleX(0.9544);">a</span>
<span id="t90" class="t" style="left:537.6px;top:85.00px;font:bold 5.6px/1 'Liberation Sans',sans-serif;color:#3f6fb3;transform:scaleX(0.8960);">i</span>
<span id="t91" class="t" style="left:620.8px;top:74.00px;font:bold 8.2px/1 'Liberation Sans',sans-serif;color:#3f6fb3;transform:scaleX(1.0807);">A</span>
<span id="t92" class="t" style="left:621.2px;top:82.60px;font:bold 8.2px/1 'Liberation Sans',sans-serif;color:#8a5fb0;transform:scaleX(0.9507);">Я</span>
<span id="t93" class="t" style="left:410.43px;top:159.50px;font:10.4px/1 'Liberation Sans',sans-serif;color:#505050;transform:scaleX(0.8995);">1</span>
<span id="t94" class="t" style="left:489.17px;top:159.50px;font:10.4px/1 'Liberation Sans',sans-serif;color:#505050;transform:scaleX(0.8995);">1</span>
<span id="t95" class="t" style="left:528.54px;top:159.50px;font:10.4px/1 'Liberation Sans',sans-serif;color:#505050;transform:scaleX(0.8995);">2</span>
<span id="t96" class="t" style="left:567.91px;top:159.50px;font:10.4px/1 'Liberation Sans',sans-serif;color:#505050;transform:scaleX(0.8995);">3</span>
<span id="t97" class="t" style="left:607.28px;top:159.50px;font:10.4px/1 'Liberation Sans',sans-serif;color:#505050;transform:scaleX(0.8995);">4</span>
<span id="t98" class="t" style="left:646.65px;top:159.50px;font:10.4px/1 'Liberation Sans',sans-serif;color:#505050;transform:scaleX(0.8995);">5</span>
<span id="t99" class="t" style="left:686.0199999999999px;top:159.50px;font:10.4px/1 'Liberation Sans',sans-serif;color:#505050;transform:scaleX(0.8995);">6</span>
<span id="t100" class="t" style="left:725.39px;top:159.50px;font:10.4px/1 'Liberation Sans',sans-serif;color:#505050;transform:scaleX(0.8995);">7</span>
<span id="t101" class="t" style="left:764.7599999999999px;top:159.50px;font:10.4px/1 'Liberation Sans',sans-serif;color:#505050;transform:scaleX(0.8995);">8</span>
<span id="t102" class="t" style="left:804.13px;top:159.50px;font:10.4px/1 'Liberation Sans',sans-serif;color:#505050;transform:scaleX(0.8995);">9</span>
<span id="t103" class="t" style="left:840.8999999999999px;top:159.50px;font:10.4px/1 'Liberation Sans',sans-serif;color:#505050;transform:scaleX(0.8995);">10</span>
<span id="t104" class="t" style="left:880.27px;top:159.50px;font:10.4px/1 'Liberation Sans',sans-serif;color:#505050;transform:scaleX(0.9632);">11</span>
<span id="t105" class="t" style="left:919.6399999999999px;top:159.50px;font:10.4px/1 'Liberation Sans',sans-serif;color:#505050;transform:scaleX(0.8995);">12</span>
<span id="t106" class="t" style="left:959.0099999999999px;top:159.50px;font:10.4px/1 'Liberation Sans',sans-serif;color:#505050;transform:scaleX(0.8995);">13</span>
<span id="t107" class="t" style="left:998.3799999999999px;top:159.50px;font:10.4px/1 'Liberation Sans',sans-serif;color:#505050;transform:scaleX(0.8995);">14</span>
<span id="t108" class="t" style="left:1037.75px;top:159.50px;font:10.4px/1 'Liberation Sans',sans-serif;color:#505050;transform:scaleX(0.8995);">15</span>
<span id="t109" class="t" style="left:1077.12px;top:159.50px;font:10.4px/1 'Liberation Sans',sans-serif;color:#505050;transform:scaleX(0.8995);">16</span>
<span id="t110" class="t" style="left:1116.4899999999998px;top:159.50px;font:10.4px/1 'Liberation Sans',sans-serif;color:#505050;transform:scaleX(0.8995);">17</span>
<span id="t111" class="t" style="left:1155.86px;top:159.50px;font:10.4px/1 'Liberation Sans',sans-serif;color:#505050;transform:scaleX(0.8995);">18</span>
<span id="t112" class="t" style="left:1195.23px;top:159.50px;font:10.4px/1 'Liberation Sans',sans-serif;color:#505050;transform:scaleX(0.8995);">19</span>
<span id="t113" class="t" style="left:1571.6px;top:883.30px;font:11px/1 'Liberation Sans',sans-serif;color:#fff;transform:scaleX(0.6531);">1</span>
<div style="left:444.4px;top:159px;width:7.2px;height:9px;background:#7e7e7e;"></div>
<div style="left:505px;top:159px;width:7.2px;height:9px;background:#7e7e7e;"></div>
<div style="left:917.4px;top:159px;width:7.2px;height:9px;background:#7e7e7e;"></div>
<div style="left:1025.4px;top:159px;width:7.2px;height:9px;background:#7e7e7e;"></div>
<div style="left:1084px;top:159px;width:7.2px;height:9px;background:#7e7e7e;"></div>
<div style="left:1182.2px;top:159px;width:7px;height:6px;background:#7e7e7e;"></div>
<svg style="left:1085px;top:153px;" width="13" height="26" viewBox="0 0 13 26"><path d="M1.6 1.4H10.8V4L6.2 8.6L1.6 4Z" fill="#fdfdfd" stroke="#9a9a9a" stroke-width="1"/><path d="M6.2 9.6L10.8 14.2V18.6H1.6V14.2Z" fill="#fdfdfd" stroke="#9a9a9a" stroke-width="1"/><rect x="1.6" y="18.9" width="9.2" height="5.4" fill="#fdfdfd" stroke="#9a9a9a" stroke-width="1"/></svg>
<svg style="left:1180px;top:163px;" width="12" height="11" viewBox="0 0 12 11"><path d="M5.6 1.8L9.8 6V9.2H1.4V6Z" fill="#fdfdfd" stroke="#9a9a9a" stroke-width="1"/></svg>
</div></body></html>
